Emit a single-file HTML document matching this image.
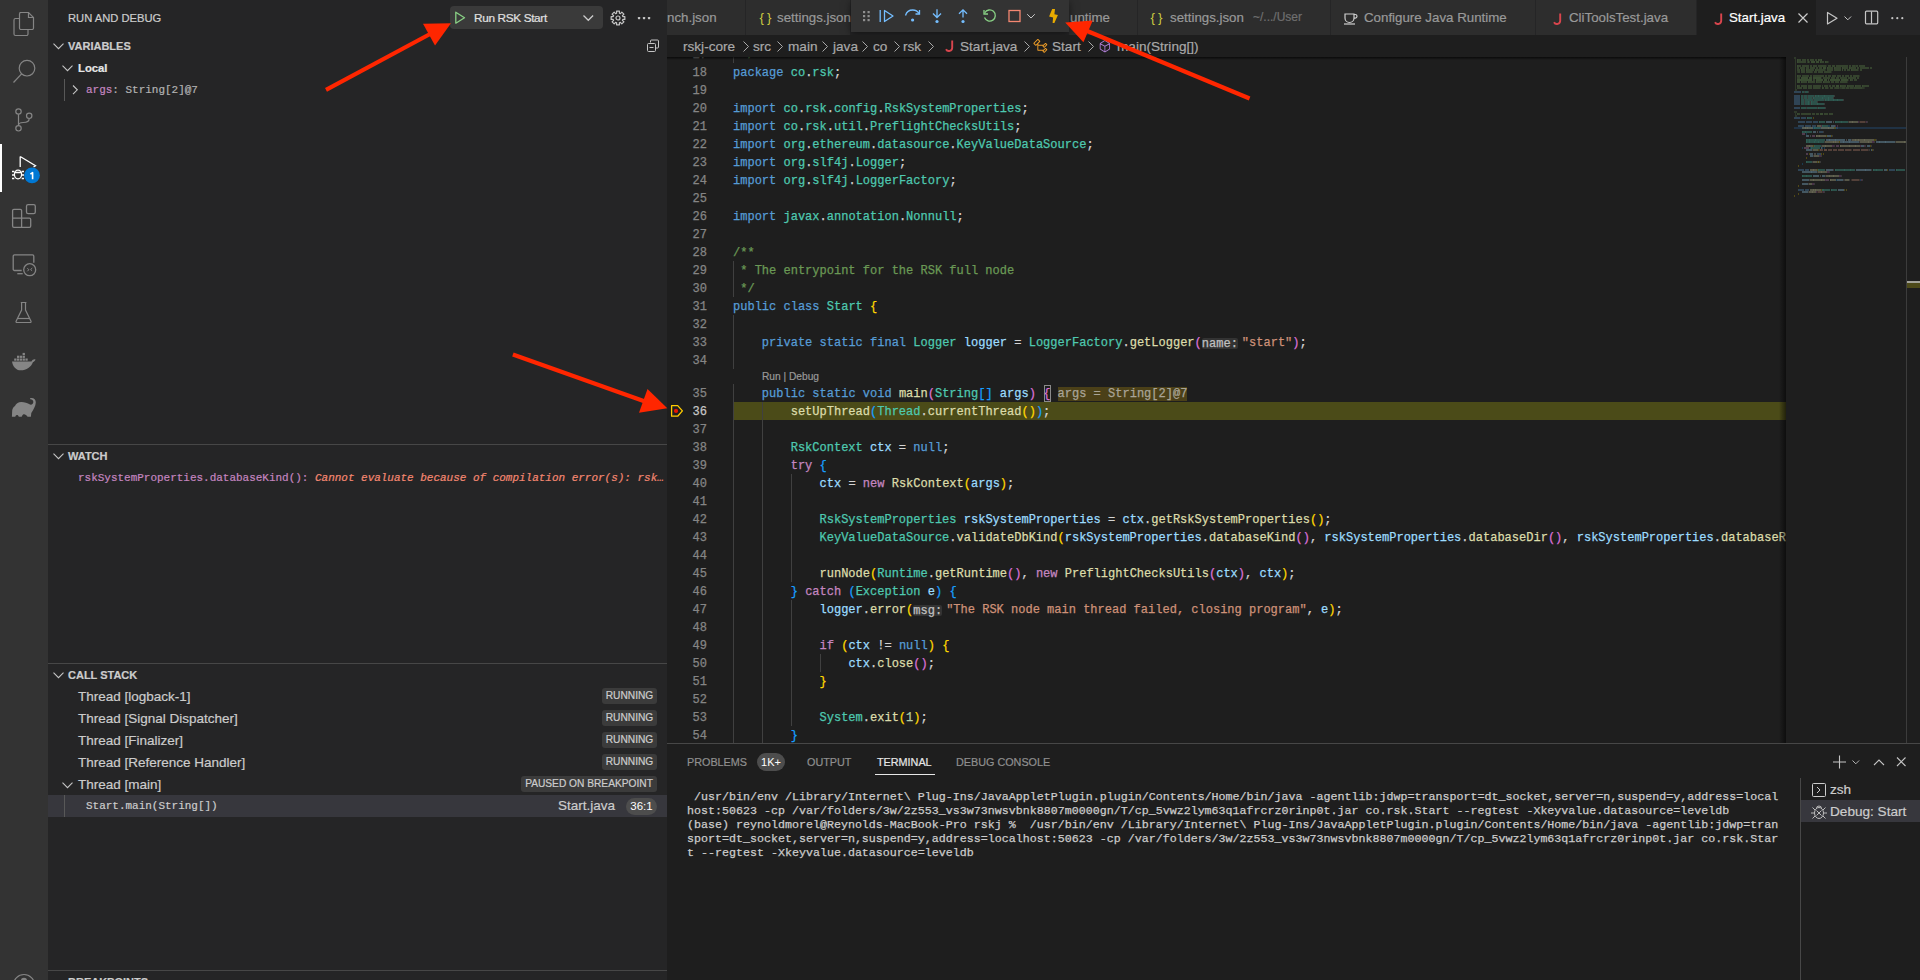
<!DOCTYPE html>
<html><head><meta charset="utf-8">
<style>
*{box-sizing:border-box;margin:0;padding:0}
html,body{width:1920px;height:980px;overflow:hidden;background:#1e1e1e;font-family:"Liberation Sans",sans-serif;color:#cccccc}
.cl,.ln,.term,.mono{-webkit-text-stroke:0.25px currentColor}
.sb,.tabt,.crumb,.thr,.ptab,.badge,.hdr{-webkit-text-stroke:0.2px currentColor}
.abs{position:absolute}
#act{position:absolute;left:0;top:0;width:48px;height:980px;background:#333333}
#side{position:absolute;left:48px;top:0;width:619px;height:980px;background:#252526}
#tabs{position:absolute;left:667px;top:0;width:1253px;height:35px;background:#252526}
#crumbs{position:absolute;left:667px;top:35px;width:1253px;height:22px;background:#1e1e1e}
#editor{position:absolute;left:667px;top:57px;width:1253px;height:686px;background:#1e1e1e;overflow:hidden}
#panel{position:absolute;left:667px;top:743px;width:1253px;height:237px;background:#1e1e1e;border-top:1px solid #474747}
.sb{position:absolute;white-space:pre}
.ln{position:absolute;left:670px;width:37px;text-align:right;height:18px;line-height:18px;padding-top:1px;font-family:"Liberation Mono",monospace;font-size:12.03px;color:#858585}
.ln.act{color:#c6c6c6}
.cl{position:absolute;left:733px;height:18px;line-height:18px;padding-top:1px;font-family:"Liberation Mono",monospace;font-size:12.03px;white-space:pre;color:#d4d4d4}
.guide{position:absolute;width:1px;height:18px;background:#404040}
.hint{display:inline-block;height:11px;line-height:13px;vertical-align:-1px;background:#333333;color:#c0c0c0;margin-right:4px;border-radius:2px}
.box{}
.inlv{background:#4b4018;color:#a9a497;margin-left:7.22px}
.ui{font-family:"Liberation Sans",sans-serif}
.mono{font-family:"Liberation Mono",monospace}
.hdr{position:absolute;font-size:11px;font-weight:bold;color:#cccccc;height:22px;line-height:22px}
.badge{position:absolute;height:16px;line-height:16px;font-size:10.2px;color:#cccccc;background:#3b3b3b;border-radius:3px;padding:0;text-align:center;white-space:nowrap}
.thr{position:absolute;left:78px;font-size:13.5px;height:22px;line-height:22px;color:#cccccc;white-space:pre}
.tab{position:absolute;top:0;height:35px;background:#2d2d2d;border-right:1px solid #252526}
.tabt{position:absolute;top:0;height:35px;line-height:35px;font-size:13.3px;color:#999999;white-space:pre}
.crumb{position:absolute;top:36px;height:22px;line-height:22px;font-size:13.6px;color:#a9a9a9;white-space:pre}
.ptab{position:absolute;top:755px;height:14px;line-height:14px;font-size:10.8px;color:#8f8f8f;white-space:pre}
.term{position:absolute;left:687px;font-family:"Liberation Mono",monospace;font-size:11.67px;height:14px;line-height:14px;color:#cccccc;white-space:pre}
</style></head>
<body>
<!-- activity bar -->
<div id="act"></div>
<div class="abs" style="left:0;top:144px;width:2px;height:48px;background:#ffffff"></div>
<svg class="abs" style="left:0;top:0" width="48" height="980" viewBox="0 0 48 980">
  <g fill="none" stroke="#858585" stroke-width="1.2">
    <!-- explorer -->
    <path d="M19.5 12.5h9l5 5v10.5a1.5 1.5 0 0 1-1.5 1.5h-11a1.5 1.5 0 0 1-1.5-1.5v-14a1.5 1.5 0 0 1 1.5-1.5z"/>
    <path d="M28.5 12.5v5h5"/>
    <path d="M19.5 18.5h-4a1.5 1.5 0 0 0-1.5 1.5v14a1.5 1.5 0 0 0 1.5 1.5h11a1.5 1.5 0 0 0 1.5-1.5v-4"/>
    <!-- search -->
    <circle cx="27" cy="68.2" r="7.8"/>
    <path d="M21.6 73.8L13.5 82.5"/>
    <!-- scm -->
    <circle cx="18.5" cy="111.5" r="2.7"/>
    <circle cx="18.5" cy="128.3" r="2.7"/>
    <circle cx="29.2" cy="115.8" r="2.7"/>
    <path d="M18.5 114.2v11.4"/>
    <path d="M29.2 118.5c0 3-3 4-6 4s-4.7 1-4.7 3"/>
    <!-- extensions -->
    <path d="M13.9 209.3h6.4a1.3 1.3 0 0 1 1.3 1.3v7.5h7.8a1.3 1.3 0 0 1 1.3 1.3v6.6a1.3 1.3 0 0 1-1.3 1.3h-15.5a1.3 1.3 0 0 1-1.3-1.3v-15.4a1.3 1.3 0 0 1 1.3-1.3zM12.6 218.1h9M21.6 218.1v9.2" stroke-width="1.3"/>
    <rect x="26.5" y="204.7" width="8.8" height="9" rx="1.6" stroke-width="1.3"/>
    <!-- remote -->
    <path d="M21.7 270.5h-7.2a1.3 1.3 0 0 1-1.3-1.3v-13a1.3 1.3 0 0 1 1.3-1.3h18a1.3 1.3 0 0 1 1.3 1.3v6.5" stroke-width="1.3"/>
    <path d="M17.3 273.7h5.4" stroke-width="1.3"/>
    <circle cx="29.7" cy="269.7" r="6" stroke-width="1.3"/>
    <path d="M27.3 268.3l1.6 1.4-1.6 1.6M32.3 268l-1.7 1.5 1.5 1.3" stroke-width="1"/>
    <!-- testing -->
    <path d="M20.8 302.5h5.6M21.6 302.5v7.5l-5.5 11.3c-.3.7.1 1.2.8 1.2h13.3c.7 0 1.1-.5.8-1.2l-5.5-11.3v-7.5"/>
    <path d="M17.8 318.5h11.8"/>
  </g>
  <!-- debug icon -->
  <g fill="none" stroke="#ffffff" stroke-width="1.3">
    <path d="M20.2 156.5v10.5M20.2 156.5l15.3 9.3-2 1.2"/>
    <ellipse cx="18" cy="174.5" rx="3.6" ry="4.3"/>
    <path d="M12 171.5h2.3M12 175h2.3M12 178.5h2.3M21.7 171.5h2.3M21.7 175h2.3M21.7 178.5h2.3M14.8 172.5h6.5"/>
  </g>
  <circle cx="32" cy="175.3" r="7.9" fill="#0078d4"/>
  <path d="M30.4 174.2L32.6 172.6V179.2" fill="none" stroke="#ffffff" stroke-width="1.6" stroke-linejoin="round"/>
  <!-- docker -->
  <g fill="#858585">
    <path d="M12 361.5h19.5c.8-1.7 2.5-2.5 4-2 -.5 1.3-1.3 2.2-2.5 2.5-1.8 5-6.5 8.3-12.3 8.3-4.7 0-8-3.7-8.7-8.8z"/>
    <rect x="14.2" y="358.5" width="2.3" height="2.2"/><rect x="17" y="358.5" width="2.3" height="2.2"/><rect x="19.8" y="358.5" width="2.3" height="2.2"/><rect x="22.6" y="358.5" width="2.3" height="2.2"/><rect x="25.4" y="358.5" width="2.3" height="2.2"/>
    <rect x="19.8" y="355.7" width="2.3" height="2.2"/><rect x="22.6" y="355.7" width="2.3" height="2.2"/><rect x="17" y="355.7" width="2.3" height="2.2"/>
    <rect x="22.6" y="352.9" width="2.3" height="2.2"/>
    <!-- gradle elephant -->
    <path d="M11.9 416.8L12.2 410.5C12.5 408.2 13.5 406.8 15 406C15.8 403.8 18 402.1 21.5 402C24.5 402 27.5 403 30 404.6C32 405 33.6 403.5 33.3 401.5C33 400 31.8 399.6 31 399.6C30 399.6 29.8 398.4 30.5 398.1C33.5 397.5 36 399.5 35.8 402.5C35.6 406 33.5 409.5 31.3 413L30.9 416.8L27.6 416.8C26.5 414.8 25 414 23.7 414.2C22.8 414.5 22 415.5 21.7 416.8L18.8 416.8C18.3 415.3 17.7 414.8 16.8 414.9C16 415 15.6 415.8 15.2 416.8Z"/>
  </g>
  <!-- account -->
  <circle cx="24" cy="985" r="10.5" fill="none" stroke="#858585" stroke-width="1.2"/>
  <circle cx="24" cy="981" r="3.2" fill="#858585"/>
</svg>

<!-- side bar -->
<div id="side"></div>
<div class="sb" style="left:68px;top:11px;font-size:11.2px;line-height:14px;color:#cccccc">RUN AND DEBUG</div>
<div class="abs" style="left:450px;top:6px;width:153px;height:23px;background:#3a3a3a;border-radius:4px"></div>
<svg class="abs" style="left:450px;top:6px" width="153" height="23" viewBox="0 0 153 23">
  <path d="M5.8 6.2v11l8.7-5.5z" fill="none" stroke="#89d185" stroke-width="1.3" stroke-linejoin="round"/>
  <path d="M133.5 9.5l4.8 4.8 4.8-4.8" fill="none" stroke="#cccccc" stroke-width="1.3"/>
</svg>
<div class="sb" style="left:474px;top:10px;font-size:11.8px;letter-spacing:-0.35px;line-height:16px;color:#e0e0e0">Run RSK Start</div>
<svg class="abs" style="left:608px;top:8px" width="20" height="20" viewBox="0 0 20 20"><g fill="none" stroke="#c5c5c5" stroke-width="1.2" stroke-linejoin="round"><path d="M14.81 8.62 L16.85 8.54 L16.85 11.46 L14.81 11.38 L14.37 12.42 L15.87 13.81 L13.81 15.87 L12.42 14.37 L11.38 14.81 L11.46 16.85 L8.54 16.85 L8.62 14.81 L7.58 14.37 L6.19 15.87 L4.13 13.81 L5.63 12.42 L5.19 11.38 L3.15 11.46 L3.15 8.54 L5.19 8.62 L5.63 7.58 L4.13 6.19 L6.19 4.13 L7.58 5.63 L8.62 5.19 L8.54 3.15 L11.46 3.15 L11.38 5.19 L12.42 5.63 L13.81 4.13 L15.87 6.19 L14.37 7.58Z"/><circle cx="10" cy="10" r="2"/></g></svg>
<svg class="abs" style="left:636px;top:15px" width="16" height="6"><g fill="#c5c5c5"><rect x="1.9" y="1.9" width="2.3" height="2.3" rx="0.6"/><rect x="6.9" y="1.9" width="2.3" height="2.3" rx="0.6"/><rect x="11.9" y="1.9" width="2.3" height="2.3" rx="0.6"/></g></svg>

<!-- VARIABLES -->
<svg class="abs" style="left:48px;top:35px" width="40" height="22"><path d="M5.5 8.7l5 5 5-5" fill="none" stroke="#c5c5c5" stroke-width="1.1"/></svg>
<div class="hdr" style="left:68px;top:35px">VARIABLES</div>
<svg class="abs" style="left:645px;top:38px" width="16" height="16" viewBox="0 0 16 16"><g fill="none" stroke="#c5c5c5" stroke-width="1"><path d="M5.5 4.5v-1.5a1 1 0 0 1 1-1h6a1 1 0 0 1 1 1v6a1 1 0 0 1-1 1h-1.5"/><rect x="2.5" y="5.5" width="8" height="8" rx="1"/><path d="M4.5 9.5h4"/></g></svg>
<svg class="abs" style="left:58px;top:57px" width="20" height="22"><path d="M4.5 8.7l5 5 5-5" fill="none" stroke="#c5c5c5" stroke-width="1.1"/></svg>
<div class="sb" style="left:78px;top:57px;font-size:11.3px;font-weight:bold;line-height:22px;color:#e6e6e6">Local</div>
<div class="abs" style="left:64px;top:79px;width:1px;height:22px;background:#585858"></div>
<svg class="abs" style="left:68px;top:79px" width="14" height="22"><path d="M5 6.5l4.3 4.3-4.3 4.3" fill="none" stroke="#c5c5c5" stroke-width="1.1"/></svg>
<div class="sb mono" style="left:86px;top:79px;font-size:10.97px;line-height:22px;color:#b3b3b3"><span style="color:#c586c0">args</span>: String[2]@7</div>

<!-- WATCH -->
<div class="abs" style="left:48px;top:444px;width:619px;height:1px;background:#474747"></div>
<svg class="abs" style="left:48px;top:445px" width="40" height="22"><path d="M5.5 8.7l5 5 5-5" fill="none" stroke="#c5c5c5" stroke-width="1.1"/></svg>
<div class="hdr" style="left:68px;top:445px">WATCH</div>
<div class="sb mono" style="left:78px;top:467px;font-size:10.97px;line-height:22px;color:#c586c0">rskSystemProperties.databaseKind(): <span style="color:#f48771;font-style:italic">Cannot evaluate because of compilation error(s): rsk…</span></div>

<!-- CALL STACK -->
<div class="abs" style="left:48px;top:663px;width:619px;height:1px;background:#474747"></div>
<svg class="abs" style="left:48px;top:664px" width="40" height="22"><path d="M5.5 8.7l5 5 5-5" fill="none" stroke="#c5c5c5" stroke-width="1.1"/></svg>
<div class="hdr" style="left:68px;top:664px">CALL STACK</div>
<div class="thr" style="top:686px">Thread [logback-1]</div>
<div class="badge" style="left:602px;top:688px;width:55px">RUNNING</div>
<div class="thr" style="top:708px">Thread [Signal Dispatcher]</div>
<div class="badge" style="left:602px;top:710px;width:55px">RUNNING</div>
<div class="thr" style="top:730px">Thread [Finalizer]</div>
<div class="badge" style="left:602px;top:732px;width:55px">RUNNING</div>
<div class="thr" style="top:752px">Thread [Reference Handler]</div>
<div class="badge" style="left:602px;top:754px;width:55px">RUNNING</div>
<svg class="abs" style="left:58px;top:774px" width="20" height="22"><path d="M4.5 8.7l5 5 5-5" fill="none" stroke="#c5c5c5" stroke-width="1.1"/></svg>
<div class="thr" style="top:774px">Thread [main]</div>
<div class="badge" style="left:521px;top:776px;width:136px;white-space:nowrap;padding:0">PAUSED ON BREAKPOINT</div>
<div class="abs" style="left:48px;top:795px;width:619px;height:22px;background:#37373d"></div>
<div class="abs" style="left:64px;top:795px;width:1px;height:22px;background:#585858"></div>
<div class="sb mono" style="left:86px;top:795px;font-size:10.97px;line-height:22px;color:#cccccc">Start.main(String[])</div>
<div class="sb" style="left:558px;top:795px;font-size:13.5px;line-height:22px;color:#cccccc">Start.java</div>
<div class="abs" style="left:626px;top:798px;width:31px;height:17px;border-radius:9px;background:#4d4d4d;font-size:11.5px;line-height:17px;text-align:center;color:#ffffff">36:1</div>

<!-- BREAKPOINTS -->
<div class="abs" style="left:48px;top:970px;width:619px;height:1px;background:#474747"></div>
<div class="hdr" style="left:68px;top:971px">BREAKPOINTS</div>

<!-- tabs -->
<div id="tabs"></div>
<div class="tab" style="left:667px;width:79px"></div>
<div class="tabt" style="left:667px">nch.json</div>
<div class="tab" style="left:746px;width:105px"></div>
<div class="tabt" style="left:759.5px;color:#cbcb41;letter-spacing:3px;-webkit-text-stroke:0">{}</div>
<div class="tabt" style="left:777px">settings.json</div>
<div class="tab" style="left:1069px;width:69px"></div>
<div class="tabt" style="left:1070px">untime</div>
<div class="tab" style="left:1138px;width:193px"></div>
<div class="tabt" style="left:1150.5px;color:#cbcb41;letter-spacing:3px;-webkit-text-stroke:0">{}</div>
<div class="tabt" style="left:1170px">settings.json</div>
<div class="tabt" style="left:1253px;font-size:12px;color:#6f6f6f">~/.../User</div>
<div class="tab" style="left:1331px;width:205px"></div>
<svg class="abs" style="left:1342px;top:10px" width="18" height="16" viewBox="0 0 18 16"><g fill="none" stroke="#d0d0d0" stroke-width="1.2"><path d="M3 4h9v4a4.5 4.5 0 0 1-9 0z"/><path d="M12 4.5h1.2a1.8 1.8 0 0 1 0 3.6H12"/><path d="M2 14h11"/></g></svg>
<div class="tabt" style="left:1364px">Configure Java Runtime</div>
<div class="tab" style="left:1536px;width:161px"></div>
<svg class="abs" style="left:1552.5px;top:12.5px" width="10" height="13" viewBox="0 0 10 13"><path d="M7.2 0.6V7.6A3.3 3.3 0 0 1 1 9.3" fill="none" stroke="#d9454d" stroke-width="1.9"/></svg>
<div class="tabt" style="left:1569px">CliToolsTest.java</div>
<div class="abs" style="left:1697px;top:0;width:119px;height:35px;background:#1e1e1e"></div>
<svg class="abs" style="left:1713.5px;top:12.5px" width="10" height="13" viewBox="0 0 10 13"><path d="M7.2 0.6V7.6A3.3 3.3 0 0 1 1 9.3" fill="none" stroke="#d9454d" stroke-width="1.9"/></svg>
<div class="tabt" style="left:1729px;color:#ffffff">Start.java</div>
<svg class="abs" style="left:1795px;top:10px" width="16" height="16" viewBox="0 0 16 16"><path d="M3.5 3.5l9 9M12.5 3.5l-9 9" fill="none" stroke="#cccccc" stroke-width="1.2"/></svg>
<svg class="abs" style="left:1822px;top:9px" width="96" height="18" viewBox="0 0 96 18">
  <g fill="none" stroke="#c5c5c5" stroke-width="1.2">
    <path d="M5.5 3.5v11.5l9.5-5.8z" stroke-linejoin="round"/>
    <path d="M22.5 7.5l3.3 3.3 3.3-3.3" stroke-width="1"/>
    <rect x="43.5" y="2.2" width="12.2" height="12.6" rx="1"/>
    <path d="M49.5 2.5v12"/>
  </g>
  <g fill="#c5c5c5"><circle cx="70.3" cy="9.2" r="1.1"/><circle cx="75.3" cy="9.2" r="1.1"/><circle cx="80.3" cy="9.2" r="1.1"/></g>
</svg>

<!-- debug toolbar -->
<div class="abs" style="left:851px;top:0;width:218px;height:32px;background:#333333;box-shadow:0 2px 8px rgba(0,0,0,0.5)"></div>
<svg class="abs" style="left:851px;top:0" width="218" height="32" viewBox="0 0 218 32">
  <g fill="#8f8f8f"><rect x="12" y="11" width="2.2" height="2.2"/><rect x="16.5" y="11" width="2.2" height="2.2"/><rect x="12" y="15" width="2.2" height="2.2"/><rect x="16.5" y="15" width="2.2" height="2.2"/><rect x="12" y="19" width="2.2" height="2.2"/><rect x="16.5" y="19" width="2.2" height="2.2"/></g>
  <g fill="none" stroke="#75beff" stroke-width="1.3">
    <path d="M29.2 10v12"/>
    <path d="M33.5 10.5v11l8.5-5.5z" stroke-linejoin="round"/>
    <path d="M54.5 15.5c1-3.5 4-5.5 7.3-5.5 2.8 0 5 1.4 6.2 3.5"/>
    <path d="M68.5 10v4h-4"/>
    <path d="M86 9.2v7.8M82 13.5l4 4 4-4"/>
    <path d="M112 10v7.5M108 13.8l4-4 4 4"/>
  </g>
  <g fill="#75beff"><circle cx="61.6" cy="20" r="1.6"/><circle cx="86" cy="21.5" r="1.6"/><circle cx="112" cy="21.5" r="1.6"/></g>
  <g fill="none" stroke="#89d185" stroke-width="1.3"><path d="M133.8 12.8a5.6 5.6 0 1 1-.3 4.8"/><path d="M133 10v4h4"/></g>
  <rect x="158" y="10.5" width="11" height="11" fill="none" stroke="#f48771" stroke-width="1.3"/>
  <path d="M176.2 14.2l3.8 3.8 3.8-3.8" fill="none" stroke="#c5c5c5" stroke-width="1"/>
  <path d="M201.2 9L204 9L203.4 14.3L206.9 15.1L203.4 23L201.6 23L202.1 17.4L198.1 16.5Z" fill="#e8ab00"/>
</svg>

<!-- breadcrumbs -->
<div id="crumbs"></div>
<div class="crumb" style="left:683px">rskj-core</div>
<div class="crumb" style="left:753px">src</div>
<div class="crumb" style="left:788px">main</div>
<div class="crumb" style="left:833px">java</div>
<div class="crumb" style="left:873px">co</div>
<div class="crumb" style="left:903px">rsk</div>
<svg class="abs" style="left:944.5px;top:40.3px" width="10" height="13" viewBox="0 0 10 13"><path d="M7.2 0.6V7.6A3.3 3.3 0 0 1 1 9.3" fill="none" stroke="#d9454d" stroke-width="1.9"/></svg>
<div class="crumb" style="left:960px">Start.java</div>
<div class="crumb" style="left:1052px">Start</div>
<div class="crumb" style="left:1117px">main(String[])</div>
<svg class="abs" style="left:667px;top:35px" width="460" height="22" viewBox="667 0 460 22">
  <g fill="none" stroke="#a9a9a9" stroke-width="1">
    <path d="M743.5 6.5l5 5-5 5M777.5 6.5l5 5-5 5M822.5 6.5l5 5-5 5M862.5 6.5l5 5-5 5M894.5 6.5l5 5-5 5M928.5 6.5l5 5-5 5M1024.5 6.5l5 5-5 5M1088.5 6.5l5 5-5 5"/>
  </g>
  <path transform="translate(1032.5 3)" fill="#ee9d28" d="M11.34 9.71h.71l2.67-2.67v-.71L13.38 5h-.7l-1.82 1.81h-5V5.560l1.860-1.860V3l-2-2H5L1 5v.71l2 2h.71l1.14-1.15v5.79l.5.5H10v.52l1.33 1.34h.71l2.670-2.670v-.710L13.37 10h-.7l-1.86 1.85h-5v-4H10v.48l1.34 1.38zm1.69-3.65l.63.63-2 2-.63-.63 2-2zm0 5l.63.63-2 2-.63-.63 2-2zM3.35 6.65l-1.29-1.3 3.29-3.29 1.3 1.29-3.3 3.3z"/>
  <path transform="translate(1098 4.5) scale(0.86)" fill="#b180d7" d="M13.51 4l-5-3h-1l-5 3-.49.86v6l.49.85 5 3h1l5-3 .49-.85v-6L13.51 4zm-6 9.560l-4.5-2.7V5.7l4.5 2.45v5.41zM3.27 4.7l4.74-2.84 4.74 2.84-4.74 2.59L3.27 4.7zm9.740 6.160l-4.5 2.7V8.15l4.5-2.45v5.16z"/>
</svg>

<!-- editor -->
<div class="abs" style="left:667px;top:57px;width:1253px;height:686px;background:#1e1e1e"></div>
<div class="abs" style="left:733px;top:402px;width:1053px;height:18px;background:#4b4b18"></div>
<div style="position:absolute;left:0;top:0;width:1786px;height:743px;overflow:hidden;clip-path:inset(57px 0 0 0)"><div class="guide" style="left:733.00px;top:45px"></div>
<div class="ln" style="top:45px">17</div>
<div class="cl" style="top:45px"><span style="color:#6a9955"> */</span></div>
<div class="ln" style="top:63px">18</div>
<div class="cl" style="top:63px"><span style="color:#569cd6">package</span><span style="color:#d4d4d4"> </span><span style="color:#4ec9b0">co</span><span style="color:#d4d4d4">.</span><span style="color:#4ec9b0">rsk</span><span style="color:#d4d4d4">;</span></div>
<div class="ln" style="top:81px">19</div>
<div class="cl" style="top:81px"></div>
<div class="ln" style="top:99px">20</div>
<div class="cl" style="top:99px"><span style="color:#569cd6">import</span><span style="color:#d4d4d4"> </span><span style="color:#4ec9b0">co</span><span style="color:#d4d4d4">.</span><span style="color:#4ec9b0">rsk</span><span style="color:#d4d4d4">.</span><span style="color:#4ec9b0">config</span><span style="color:#d4d4d4">.</span><span style="color:#4ec9b0">RskSystemProperties</span><span style="color:#d4d4d4">;</span></div>
<div class="ln" style="top:117px">21</div>
<div class="cl" style="top:117px"><span style="color:#569cd6">import</span><span style="color:#d4d4d4"> </span><span style="color:#4ec9b0">co</span><span style="color:#d4d4d4">.</span><span style="color:#4ec9b0">rsk</span><span style="color:#d4d4d4">.</span><span style="color:#4ec9b0">util</span><span style="color:#d4d4d4">.</span><span style="color:#4ec9b0">PreflightChecksUtils</span><span style="color:#d4d4d4">;</span></div>
<div class="ln" style="top:135px">22</div>
<div class="cl" style="top:135px"><span style="color:#569cd6">import</span><span style="color:#d4d4d4"> </span><span style="color:#4ec9b0">org</span><span style="color:#d4d4d4">.</span><span style="color:#4ec9b0">ethereum</span><span style="color:#d4d4d4">.</span><span style="color:#4ec9b0">datasource</span><span style="color:#d4d4d4">.</span><span style="color:#4ec9b0">KeyValueDataSource</span><span style="color:#d4d4d4">;</span></div>
<div class="ln" style="top:153px">23</div>
<div class="cl" style="top:153px"><span style="color:#569cd6">import</span><span style="color:#d4d4d4"> </span><span style="color:#4ec9b0">org</span><span style="color:#d4d4d4">.</span><span style="color:#4ec9b0">slf4j</span><span style="color:#d4d4d4">.</span><span style="color:#4ec9b0">Logger</span><span style="color:#d4d4d4">;</span></div>
<div class="ln" style="top:171px">24</div>
<div class="cl" style="top:171px"><span style="color:#569cd6">import</span><span style="color:#d4d4d4"> </span><span style="color:#4ec9b0">org</span><span style="color:#d4d4d4">.</span><span style="color:#4ec9b0">slf4j</span><span style="color:#d4d4d4">.</span><span style="color:#4ec9b0">LoggerFactory</span><span style="color:#d4d4d4">;</span></div>
<div class="ln" style="top:189px">25</div>
<div class="cl" style="top:189px"></div>
<div class="ln" style="top:207px">26</div>
<div class="cl" style="top:207px"><span style="color:#569cd6">import</span><span style="color:#d4d4d4"> </span><span style="color:#4ec9b0">javax</span><span style="color:#d4d4d4">.</span><span style="color:#4ec9b0">annotation</span><span style="color:#d4d4d4">.</span><span style="color:#4ec9b0">Nonnull</span><span style="color:#d4d4d4">;</span></div>
<div class="ln" style="top:225px">27</div>
<div class="cl" style="top:225px"></div>
<div class="ln" style="top:243px">28</div>
<div class="cl" style="top:243px"><span style="color:#6a9955">/**</span></div>
<div class="guide" style="left:733.00px;top:261px"></div>
<div class="ln" style="top:261px">29</div>
<div class="cl" style="top:261px"><span style="color:#6a9955"> * The entrypoint for the RSK full node</span></div>
<div class="guide" style="left:733.00px;top:279px"></div>
<div class="ln" style="top:279px">30</div>
<div class="cl" style="top:279px"><span style="color:#6a9955"> */</span></div>
<div class="ln" style="top:297px">31</div>
<div class="cl" style="top:297px"><span style="color:#569cd6">public</span><span style="color:#d4d4d4"> </span><span style="color:#569cd6">class</span><span style="color:#d4d4d4"> </span><span style="color:#4ec9b0">Start</span><span style="color:#d4d4d4"> </span><span style="color:#ffd700">{</span></div>
<div class="guide" style="left:733.00px;top:315px"></div>
<div class="ln" style="top:315px">32</div>
<div class="cl" style="top:315px"></div>
<div class="guide" style="left:733.00px;top:333px"></div>
<div class="ln" style="top:333px">33</div>
<div class="cl" style="top:333px"><span style="color:#d4d4d4">    </span><span style="color:#569cd6">private</span><span style="color:#d4d4d4"> </span><span style="color:#569cd6">static</span><span style="color:#d4d4d4"> </span><span style="color:#569cd6">final</span><span style="color:#d4d4d4"> </span><span style="color:#4ec9b0">Logger</span><span style="color:#d4d4d4"> </span><span style="color:#9cdcfe">logger</span><span style="color:#d4d4d4"> = </span><span style="color:#4ec9b0">LoggerFactory</span><span style="color:#d4d4d4">.</span><span style="color:#dcdcaa">getLogger</span><span style="color:#da70d6">(</span><span class="hint">name:</span><span style="color:#ce9178">"start"</span><span style="color:#da70d6">)</span><span style="color:#d4d4d4">;</span></div>
<div class="guide" style="left:733.00px;top:351px"></div>
<div class="ln" style="top:351px">34</div>
<div class="cl" style="top:351px"></div>
<div class="guide" style="left:733.00px;top:384px"></div>
<div class="ln" style="top:384px">35</div>
<div class="cl" style="top:384px"><span style="color:#d4d4d4">    </span><span style="color:#569cd6">public</span><span style="color:#d4d4d4"> </span><span style="color:#569cd6">static</span><span style="color:#d4d4d4"> </span><span style="color:#569cd6">void</span><span style="color:#d4d4d4"> </span><span style="color:#dcdcaa">main</span><span style="color:#da70d6">(</span><span style="color:#4ec9b0">String</span><span style="color:#179fff">[]</span><span style="color:#d4d4d4"> </span><span style="color:#9cdcfe">args</span><span style="color:#da70d6">)</span><span style="color:#d4d4d4"> </span><span class="box" style="color:#da70d6">{</span><span class="inlv">args = String[2]@7</span></div>
<div class="guide" style="left:733.00px;top:402px"></div>
<div class="guide" style="left:761.88px;top:402px"></div>
<div class="ln act" style="top:402px">36</div>
<div class="cl" style="top:402px"><span style="color:#d4d4d4">        </span><span style="color:#dcdcaa">setUpThread</span><span style="color:#179fff">(</span><span style="color:#4ec9b0">Thread</span><span style="color:#d4d4d4">.</span><span style="color:#dcdcaa">currentThread</span><span style="color:#ffd700">()</span><span style="color:#179fff">)</span><span style="color:#d4d4d4">;</span></div>
<div class="guide" style="left:733.00px;top:420px"></div>
<div class="guide" style="left:761.88px;top:420px"></div>
<div class="ln" style="top:420px">37</div>
<div class="cl" style="top:420px"></div>
<div class="guide" style="left:733.00px;top:438px"></div>
<div class="guide" style="left:761.88px;top:438px"></div>
<div class="ln" style="top:438px">38</div>
<div class="cl" style="top:438px"><span style="color:#d4d4d4">        </span><span style="color:#4ec9b0">RskContext</span><span style="color:#d4d4d4"> </span><span style="color:#9cdcfe">ctx</span><span style="color:#d4d4d4"> = </span><span style="color:#569cd6">null</span><span style="color:#d4d4d4">;</span></div>
<div class="guide" style="left:733.00px;top:456px"></div>
<div class="guide" style="left:761.88px;top:456px"></div>
<div class="ln" style="top:456px">39</div>
<div class="cl" style="top:456px"><span style="color:#d4d4d4">        </span><span style="color:#c586c0">try</span><span style="color:#d4d4d4"> </span><span style="color:#179fff">{</span></div>
<div class="guide" style="left:733.00px;top:474px"></div>
<div class="guide" style="left:761.88px;top:474px"></div>
<div class="guide" style="left:790.76px;top:474px"></div>
<div class="ln" style="top:474px">40</div>
<div class="cl" style="top:474px"><span style="color:#d4d4d4">            </span><span style="color:#9cdcfe">ctx</span><span style="color:#d4d4d4"> = </span><span style="color:#c586c0">new</span><span style="color:#d4d4d4"> </span><span style="color:#dcdcaa">RskContext</span><span style="color:#ffd700">(</span><span style="color:#9cdcfe">args</span><span style="color:#ffd700">)</span><span style="color:#d4d4d4">;</span></div>
<div class="guide" style="left:733.00px;top:492px"></div>
<div class="guide" style="left:761.88px;top:492px"></div>
<div class="guide" style="left:790.76px;top:492px"></div>
<div class="ln" style="top:492px">41</div>
<div class="cl" style="top:492px"></div>
<div class="guide" style="left:733.00px;top:510px"></div>
<div class="guide" style="left:761.88px;top:510px"></div>
<div class="guide" style="left:790.76px;top:510px"></div>
<div class="ln" style="top:510px">42</div>
<div class="cl" style="top:510px"><span style="color:#d4d4d4">            </span><span style="color:#4ec9b0">RskSystemProperties</span><span style="color:#d4d4d4"> </span><span style="color:#9cdcfe">rskSystemProperties</span><span style="color:#d4d4d4"> = </span><span style="color:#9cdcfe">ctx</span><span style="color:#d4d4d4">.</span><span style="color:#dcdcaa">getRskSystemProperties</span><span style="color:#ffd700">()</span><span style="color:#d4d4d4">;</span></div>
<div class="guide" style="left:733.00px;top:528px"></div>
<div class="guide" style="left:761.88px;top:528px"></div>
<div class="guide" style="left:790.76px;top:528px"></div>
<div class="ln" style="top:528px">43</div>
<div class="cl" style="top:528px"><span style="color:#d4d4d4">            </span><span style="color:#4ec9b0">KeyValueDataSource</span><span style="color:#d4d4d4">.</span><span style="color:#dcdcaa">validateDbKind</span><span style="color:#ffd700">(</span><span style="color:#9cdcfe">rskSystemProperties</span><span style="color:#d4d4d4">.</span><span style="color:#dcdcaa">databaseKind</span><span style="color:#da70d6">()</span><span style="color:#d4d4d4">, </span><span style="color:#9cdcfe">rskSystemProperties</span><span style="color:#d4d4d4">.</span><span style="color:#dcdcaa">databaseDir</span><span style="color:#da70d6">()</span><span style="color:#d4d4d4">, </span><span style="color:#9cdcfe">rskSystemProperties</span><span style="color:#d4d4d4">.</span><span style="color:#dcdcaa">databaseReset</span><span style="color:#da70d6">()</span><span style="color:#d4d4d4">, </span><span style="color:#9cdcfe">rskSystemProperties</span><span style="color:#d4d4d4">.</span><span style="color:#dcdcaa">importEnabled</span><span style="color:#da70d6">()</span><span style="color:#ffd700">)</span><span style="color:#d4d4d4">;</span></div>
<div class="guide" style="left:733.00px;top:546px"></div>
<div class="guide" style="left:761.88px;top:546px"></div>
<div class="guide" style="left:790.76px;top:546px"></div>
<div class="ln" style="top:546px">44</div>
<div class="cl" style="top:546px"></div>
<div class="guide" style="left:733.00px;top:564px"></div>
<div class="guide" style="left:761.88px;top:564px"></div>
<div class="guide" style="left:790.76px;top:564px"></div>
<div class="ln" style="top:564px">45</div>
<div class="cl" style="top:564px"><span style="color:#d4d4d4">            </span><span style="color:#dcdcaa">runNode</span><span style="color:#ffd700">(</span><span style="color:#4ec9b0">Runtime</span><span style="color:#d4d4d4">.</span><span style="color:#dcdcaa">getRuntime</span><span style="color:#da70d6">()</span><span style="color:#d4d4d4">, </span><span style="color:#c586c0">new</span><span style="color:#d4d4d4"> </span><span style="color:#dcdcaa">PreflightChecksUtils</span><span style="color:#da70d6">(</span><span style="color:#9cdcfe">ctx</span><span style="color:#da70d6">)</span><span style="color:#d4d4d4">, </span><span style="color:#9cdcfe">ctx</span><span style="color:#ffd700">)</span><span style="color:#d4d4d4">;</span></div>
<div class="guide" style="left:733.00px;top:582px"></div>
<div class="guide" style="left:761.88px;top:582px"></div>
<div class="ln" style="top:582px">46</div>
<div class="cl" style="top:582px"><span style="color:#d4d4d4">        </span><span style="color:#179fff">}</span><span style="color:#d4d4d4"> </span><span style="color:#c586c0">catch</span><span style="color:#d4d4d4"> </span><span style="color:#179fff">(</span><span style="color:#4ec9b0">Exception</span><span style="color:#d4d4d4"> </span><span style="color:#9cdcfe">e</span><span style="color:#179fff">)</span><span style="color:#d4d4d4"> </span><span style="color:#179fff">{</span></div>
<div class="guide" style="left:733.00px;top:600px"></div>
<div class="guide" style="left:761.88px;top:600px"></div>
<div class="guide" style="left:790.76px;top:600px"></div>
<div class="ln" style="top:600px">47</div>
<div class="cl" style="top:600px"><span style="color:#d4d4d4">            </span><span style="color:#9cdcfe">logger</span><span style="color:#d4d4d4">.</span><span style="color:#dcdcaa">error</span><span style="color:#ffd700">(</span><span class="hint">msg:</span><span style="color:#ce9178">"The RSK node main thread failed, closing program"</span><span style="color:#d4d4d4">, </span><span style="color:#9cdcfe">e</span><span style="color:#ffd700">)</span><span style="color:#d4d4d4">;</span></div>
<div class="guide" style="left:733.00px;top:618px"></div>
<div class="guide" style="left:761.88px;top:618px"></div>
<div class="guide" style="left:790.76px;top:618px"></div>
<div class="ln" style="top:618px">48</div>
<div class="cl" style="top:618px"></div>
<div class="guide" style="left:733.00px;top:636px"></div>
<div class="guide" style="left:761.88px;top:636px"></div>
<div class="guide" style="left:790.76px;top:636px"></div>
<div class="ln" style="top:636px">49</div>
<div class="cl" style="top:636px"><span style="color:#d4d4d4">            </span><span style="color:#c586c0">if</span><span style="color:#d4d4d4"> </span><span style="color:#ffd700">(</span><span style="color:#9cdcfe">ctx</span><span style="color:#d4d4d4"> != </span><span style="color:#569cd6">null</span><span style="color:#ffd700">)</span><span style="color:#d4d4d4"> </span><span style="color:#ffd700">{</span></div>
<div class="guide" style="left:733.00px;top:654px"></div>
<div class="guide" style="left:761.88px;top:654px"></div>
<div class="guide" style="left:790.76px;top:654px"></div>
<div class="guide" style="left:819.64px;top:654px"></div>
<div class="ln" style="top:654px">50</div>
<div class="cl" style="top:654px"><span style="color:#d4d4d4">                </span><span style="color:#9cdcfe">ctx</span><span style="color:#d4d4d4">.</span><span style="color:#dcdcaa">close</span><span style="color:#da70d6">()</span><span style="color:#d4d4d4">;</span></div>
<div class="guide" style="left:733.00px;top:672px"></div>
<div class="guide" style="left:761.88px;top:672px"></div>
<div class="guide" style="left:790.76px;top:672px"></div>
<div class="ln" style="top:672px">51</div>
<div class="cl" style="top:672px"><span style="color:#d4d4d4">            </span><span style="color:#ffd700">}</span></div>
<div class="guide" style="left:733.00px;top:690px"></div>
<div class="guide" style="left:761.88px;top:690px"></div>
<div class="guide" style="left:790.76px;top:690px"></div>
<div class="ln" style="top:690px">52</div>
<div class="cl" style="top:690px"></div>
<div class="guide" style="left:733.00px;top:708px"></div>
<div class="guide" style="left:761.88px;top:708px"></div>
<div class="guide" style="left:790.76px;top:708px"></div>
<div class="ln" style="top:708px">53</div>
<div class="cl" style="top:708px"><span style="color:#d4d4d4">            </span><span style="color:#4ec9b0">System</span><span style="color:#d4d4d4">.</span><span style="color:#dcdcaa">exit</span><span style="color:#ffd700">(</span><span style="color:#b5cea8">1</span><span style="color:#ffd700">)</span><span style="color:#d4d4d4">;</span></div>
<div class="guide" style="left:733.00px;top:726px"></div>
<div class="guide" style="left:761.88px;top:726px"></div>
<div class="ln" style="top:726px">54</div>
<div class="cl" style="top:726px"><span style="color:#d4d4d4">        </span><span style="color:#179fff">}</span></div></div>
<div class="abs" style="left:1044px;top:384.5px;width:7px;height:17px;border:1px solid #8a8a8a"></div>
<div class="sb" style="left:762px;top:369px;height:15px;line-height:15px;font-size:10.2px;color:#999999">Run | Debug</div>
<!-- breakpoint -->
<svg class="abs" style="left:670px;top:404px" width="15" height="14" viewBox="0 0 15 14"><path d="M1.6 1.6H7.7L12.4 6.9L7.7 12.2H1.6Z" fill="#1e1e1e" stroke="#ffcc00" stroke-width="1.3" stroke-linejoin="round"/><circle cx="6" cy="6.9" r="2.1" fill="#e51400"/></svg>
<!-- scroll shadow under breadcrumbs -->
<div class="abs" style="left:667px;top:57px;width:1119px;height:3px;background:linear-gradient(#000000aa,transparent)"></div>
<!-- minimap -->
<div class="abs" style="left:1779px;top:57px;width:7px;height:686px;background:linear-gradient(to right,rgba(0,0,0,0),rgba(0,0,0,0.55))"></div>
<svg class="abs" style="left:1794px;top:57px;opacity:0.5" width="112" height="160" viewBox="0 0 112 160"><rect x="0" y="70" width="112" height="2" fill="#22466a"/><rect x="0" y="0" width="2" height="2" fill="#6a9955" fill-opacity="0.45"/><rect x="1" y="2" width="1" height="2" fill="#6a9955" fill-opacity="0.45"/><rect x="3" y="2" width="1" height="2" fill="#6a9955" fill-opacity="0.75"/><rect x="4" y="2" width="3" height="2" fill="#6a9955" fill-opacity="0.60"/><rect x="8" y="2" width="4" height="2" fill="#6a9955" fill-opacity="0.60"/><rect x="13" y="2" width="2" height="2" fill="#6a9955" fill-opacity="0.60"/><rect x="16" y="2" width="4" height="2" fill="#6a9955" fill-opacity="0.60"/><rect x="21" y="2" width="2" height="2" fill="#6a9955" fill-opacity="0.60"/><rect x="24" y="2" width="1" height="2" fill="#6a9955" fill-opacity="0.75"/><rect x="25" y="2" width="2" height="2" fill="#6a9955" fill-opacity="0.60"/><rect x="27" y="2" width="1" height="2" fill="#6a9955" fill-opacity="0.75"/><rect x="1" y="4" width="1" height="2" fill="#6a9955" fill-opacity="0.45"/><rect x="3" y="4" width="1" height="2" fill="#6a9955" fill-opacity="0.75"/><rect x="4" y="4" width="8" height="2" fill="#6a9955" fill-opacity="0.60"/><rect x="13" y="4" width="1" height="2" fill="#6a9955" fill-opacity="0.45"/><rect x="14" y="4" width="1" height="2" fill="#6a9955" fill-opacity="0.75"/><rect x="15" y="4" width="1" height="2" fill="#6a9955" fill-opacity="0.45"/><rect x="17" y="4" width="4" height="2" fill="#6a9955" fill-opacity="0.75"/><rect x="22" y="4" width="3" height="2" fill="#6a9955" fill-opacity="0.75"/><rect x="26" y="4" width="1" height="2" fill="#6a9955" fill-opacity="0.75"/><rect x="27" y="4" width="3" height="2" fill="#6a9955" fill-opacity="0.60"/><rect x="31" y="4" width="1" height="2" fill="#6a9955" fill-opacity="0.75"/><rect x="32" y="4" width="2" height="2" fill="#6a9955" fill-opacity="0.60"/><rect x="34" y="4" width="1" height="2" fill="#6a9955" fill-opacity="0.30"/><rect x="1" y="6" width="1" height="2" fill="#6a9955" fill-opacity="0.45"/><rect x="1" y="8" width="1" height="2" fill="#6a9955" fill-opacity="0.45"/><rect x="3" y="8" width="1" height="2" fill="#6a9955" fill-opacity="0.75"/><rect x="4" y="8" width="3" height="2" fill="#6a9955" fill-opacity="0.60"/><rect x="8" y="8" width="7" height="2" fill="#6a9955" fill-opacity="0.60"/><rect x="16" y="8" width="2" height="2" fill="#6a9955" fill-opacity="0.60"/><rect x="19" y="8" width="4" height="2" fill="#6a9955" fill-opacity="0.60"/><rect x="24" y="8" width="8" height="2" fill="#6a9955" fill-opacity="0.60"/><rect x="32" y="8" width="1" height="2" fill="#6a9955" fill-opacity="0.30"/><rect x="34" y="8" width="3" height="2" fill="#6a9955" fill-opacity="0.60"/><rect x="38" y="8" width="3" height="2" fill="#6a9955" fill-opacity="0.60"/><rect x="42" y="8" width="12" height="2" fill="#6a9955" fill-opacity="0.60"/><rect x="55" y="8" width="2" height="2" fill="#6a9955" fill-opacity="0.60"/><rect x="58" y="8" width="3" height="2" fill="#6a9955" fill-opacity="0.60"/><rect x="61" y="8" width="1" height="2" fill="#6a9955" fill-opacity="0.45"/><rect x="62" y="8" width="2" height="2" fill="#6a9955" fill-opacity="0.60"/><rect x="65" y="8" width="6" height="2" fill="#6a9955" fill-opacity="0.60"/><rect x="1" y="10" width="1" height="2" fill="#6a9955" fill-opacity="0.45"/><rect x="3" y="10" width="2" height="2" fill="#6a9955" fill-opacity="0.60"/><rect x="6" y="10" width="5" height="2" fill="#6a9955" fill-opacity="0.60"/><rect x="12" y="10" width="3" height="2" fill="#6a9955" fill-opacity="0.60"/><rect x="16" y="10" width="5" height="2" fill="#6a9955" fill-opacity="0.60"/><rect x="22" y="10" width="2" height="2" fill="#6a9955" fill-opacity="0.60"/><rect x="25" y="10" width="3" height="2" fill="#6a9955" fill-opacity="0.60"/><rect x="29" y="10" width="3" height="2" fill="#6a9955" fill-opacity="0.75"/><rect x="33" y="10" width="1" height="2" fill="#6a9955" fill-opacity="0.75"/><rect x="34" y="10" width="5" height="2" fill="#6a9955" fill-opacity="0.60"/><rect x="40" y="10" width="1" height="2" fill="#6a9955" fill-opacity="0.75"/><rect x="41" y="10" width="6" height="2" fill="#6a9955" fill-opacity="0.60"/><rect x="48" y="10" width="1" height="2" fill="#6a9955" fill-opacity="0.75"/><rect x="49" y="10" width="5" height="2" fill="#6a9955" fill-opacity="0.60"/><rect x="55" y="10" width="1" height="2" fill="#6a9955" fill-opacity="0.75"/><rect x="56" y="10" width="6" height="2" fill="#6a9955" fill-opacity="0.60"/><rect x="63" y="10" width="2" height="2" fill="#6a9955" fill-opacity="0.60"/><rect x="66" y="10" width="9" height="2" fill="#6a9955" fill-opacity="0.60"/><rect x="76" y="10" width="2" height="2" fill="#6a9955" fill-opacity="0.60"/><rect x="1" y="12" width="1" height="2" fill="#6a9955" fill-opacity="0.45"/><rect x="3" y="12" width="3" height="2" fill="#6a9955" fill-opacity="0.60"/><rect x="7" y="12" width="1" height="2" fill="#6a9955" fill-opacity="0.75"/><rect x="8" y="12" width="3" height="2" fill="#6a9955" fill-opacity="0.60"/><rect x="12" y="12" width="1" height="2" fill="#6a9955" fill-opacity="0.75"/><rect x="13" y="12" width="7" height="2" fill="#6a9955" fill-opacity="0.60"/><rect x="21" y="12" width="1" height="2" fill="#6a9955" fill-opacity="0.75"/><rect x="22" y="12" width="9" height="2" fill="#6a9955" fill-opacity="0.60"/><rect x="31" y="12" width="1" height="2" fill="#6a9955" fill-opacity="0.30"/><rect x="33" y="12" width="6" height="2" fill="#6a9955" fill-opacity="0.60"/><rect x="40" y="12" width="7" height="2" fill="#6a9955" fill-opacity="0.60"/><rect x="48" y="12" width="1" height="2" fill="#6a9955" fill-opacity="0.75"/><rect x="50" y="12" width="2" height="2" fill="#6a9955" fill-opacity="0.60"/><rect x="53" y="12" width="3" height="2" fill="#6a9955" fill-opacity="0.60"/><rect x="57" y="12" width="1" height="2" fill="#6a9955" fill-opacity="0.75"/><rect x="58" y="12" width="6" height="2" fill="#6a9955" fill-opacity="0.60"/><rect x="64" y="12" width="1" height="2" fill="#6a9955" fill-opacity="0.30"/><rect x="66" y="12" width="2" height="2" fill="#6a9955" fill-opacity="0.60"/><rect x="1" y="14" width="1" height="2" fill="#6a9955" fill-opacity="0.45"/><rect x="3" y="14" width="1" height="2" fill="#6a9955" fill-opacity="0.45"/><rect x="4" y="14" width="2" height="2" fill="#6a9955" fill-opacity="0.60"/><rect x="7" y="14" width="4" height="2" fill="#6a9955" fill-opacity="0.60"/><rect x="12" y="14" width="6" height="2" fill="#6a9955" fill-opacity="0.60"/><rect x="18" y="14" width="1" height="2" fill="#6a9955" fill-opacity="0.45"/><rect x="20" y="14" width="3" height="2" fill="#6a9955" fill-opacity="0.60"/><rect x="24" y="14" width="5" height="2" fill="#6a9955" fill-opacity="0.60"/><rect x="30" y="14" width="7" height="2" fill="#6a9955" fill-opacity="0.60"/><rect x="37" y="14" width="1" height="2" fill="#6a9955" fill-opacity="0.30"/><rect x="1" y="16" width="1" height="2" fill="#6a9955" fill-opacity="0.45"/><rect x="1" y="18" width="1" height="2" fill="#6a9955" fill-opacity="0.45"/><rect x="3" y="18" width="1" height="2" fill="#6a9955" fill-opacity="0.75"/><rect x="4" y="18" width="3" height="2" fill="#6a9955" fill-opacity="0.60"/><rect x="8" y="18" width="7" height="2" fill="#6a9955" fill-opacity="0.60"/><rect x="16" y="18" width="2" height="2" fill="#6a9955" fill-opacity="0.60"/><rect x="19" y="18" width="11" height="2" fill="#6a9955" fill-opacity="0.60"/><rect x="31" y="18" width="2" height="2" fill="#6a9955" fill-opacity="0.60"/><rect x="34" y="18" width="3" height="2" fill="#6a9955" fill-opacity="0.60"/><rect x="38" y="18" width="4" height="2" fill="#6a9955" fill-opacity="0.60"/><rect x="43" y="18" width="4" height="2" fill="#6a9955" fill-opacity="0.60"/><rect x="48" y="18" width="2" height="2" fill="#6a9955" fill-opacity="0.60"/><rect x="51" y="18" width="4" height="2" fill="#6a9955" fill-opacity="0.60"/><rect x="56" y="18" width="2" height="2" fill="#6a9955" fill-opacity="0.60"/><rect x="59" y="18" width="6" height="2" fill="#6a9955" fill-opacity="0.60"/><rect x="65" y="18" width="1" height="2" fill="#6a9955" fill-opacity="0.30"/><rect x="1" y="20" width="1" height="2" fill="#6a9955" fill-opacity="0.45"/><rect x="3" y="20" width="3" height="2" fill="#6a9955" fill-opacity="0.60"/><rect x="7" y="20" width="7" height="2" fill="#6a9955" fill-opacity="0.75"/><rect x="15" y="20" width="3" height="2" fill="#6a9955" fill-opacity="0.75"/><rect x="19" y="20" width="8" height="2" fill="#6a9955" fill-opacity="0.75"/><rect x="27" y="20" width="1" height="2" fill="#6a9955" fill-opacity="0.30"/><rect x="29" y="20" width="7" height="2" fill="#6a9955" fill-opacity="0.60"/><rect x="37" y="20" width="4" height="2" fill="#6a9955" fill-opacity="0.60"/><rect x="42" y="20" width="3" height="2" fill="#6a9955" fill-opacity="0.60"/><rect x="46" y="20" width="7" height="2" fill="#6a9955" fill-opacity="0.60"/><rect x="54" y="20" width="8" height="2" fill="#6a9955" fill-opacity="0.60"/><rect x="63" y="20" width="2" height="2" fill="#6a9955" fill-opacity="0.60"/><rect x="1" y="22" width="1" height="2" fill="#6a9955" fill-opacity="0.45"/><rect x="3" y="22" width="15" height="2" fill="#6a9955" fill-opacity="0.75"/><rect x="19" y="22" width="2" height="2" fill="#6a9955" fill-opacity="0.60"/><rect x="22" y="22" width="7" height="2" fill="#6a9955" fill-opacity="0.75"/><rect x="30" y="22" width="3" height="2" fill="#6a9955" fill-opacity="0.75"/><rect x="34" y="22" width="1" height="2" fill="#6a9955" fill-opacity="0.75"/><rect x="36" y="22" width="10" height="2" fill="#6a9955" fill-opacity="0.75"/><rect x="47" y="22" width="7" height="2" fill="#6a9955" fill-opacity="0.75"/><rect x="54" y="22" width="1" height="2" fill="#6a9955" fill-opacity="0.30"/><rect x="56" y="22" width="1" height="2" fill="#6a9955" fill-opacity="0.75"/><rect x="57" y="22" width="2" height="2" fill="#6a9955" fill-opacity="0.60"/><rect x="60" y="22" width="3" height="2" fill="#6a9955" fill-opacity="0.60"/><rect x="1" y="24" width="1" height="2" fill="#6a9955" fill-opacity="0.45"/><rect x="3" y="24" width="3" height="2" fill="#6a9955" fill-opacity="0.75"/><rect x="7" y="24" width="1" height="2" fill="#6a9955" fill-opacity="0.75"/><rect x="8" y="24" width="5" height="2" fill="#6a9955" fill-opacity="0.60"/><rect x="14" y="24" width="1" height="2" fill="#6a9955" fill-opacity="0.75"/><rect x="15" y="24" width="6" height="2" fill="#6a9955" fill-opacity="0.60"/><rect x="22" y="24" width="1" height="2" fill="#6a9955" fill-opacity="0.75"/><rect x="23" y="24" width="5" height="2" fill="#6a9955" fill-opacity="0.60"/><rect x="29" y="24" width="1" height="2" fill="#6a9955" fill-opacity="0.75"/><rect x="30" y="24" width="6" height="2" fill="#6a9955" fill-opacity="0.60"/><rect x="37" y="24" width="3" height="2" fill="#6a9955" fill-opacity="0.60"/><rect x="41" y="24" width="4" height="2" fill="#6a9955" fill-opacity="0.60"/><rect x="46" y="24" width="7" height="2" fill="#6a9955" fill-opacity="0.60"/><rect x="53" y="24" width="1" height="2" fill="#6a9955" fill-opacity="0.30"/><rect x="1" y="26" width="1" height="2" fill="#6a9955" fill-opacity="0.45"/><rect x="1" y="28" width="1" height="2" fill="#6a9955" fill-opacity="0.45"/><rect x="3" y="28" width="1" height="2" fill="#6a9955" fill-opacity="0.75"/><rect x="4" y="28" width="2" height="2" fill="#6a9955" fill-opacity="0.60"/><rect x="7" y="28" width="6" height="2" fill="#6a9955" fill-opacity="0.60"/><rect x="14" y="28" width="4" height="2" fill="#6a9955" fill-opacity="0.60"/><rect x="19" y="28" width="8" height="2" fill="#6a9955" fill-opacity="0.60"/><rect x="28" y="28" width="1" height="2" fill="#6a9955" fill-opacity="0.60"/><rect x="30" y="28" width="4" height="2" fill="#6a9955" fill-opacity="0.60"/><rect x="35" y="28" width="2" height="2" fill="#6a9955" fill-opacity="0.60"/><rect x="38" y="28" width="3" height="2" fill="#6a9955" fill-opacity="0.60"/><rect x="42" y="28" width="3" height="2" fill="#6a9955" fill-opacity="0.75"/><rect x="46" y="28" width="1" height="2" fill="#6a9955" fill-opacity="0.75"/><rect x="47" y="28" width="5" height="2" fill="#6a9955" fill-opacity="0.60"/><rect x="53" y="28" width="1" height="2" fill="#6a9955" fill-opacity="0.75"/><rect x="54" y="28" width="6" height="2" fill="#6a9955" fill-opacity="0.60"/><rect x="61" y="28" width="1" height="2" fill="#6a9955" fill-opacity="0.75"/><rect x="62" y="28" width="5" height="2" fill="#6a9955" fill-opacity="0.60"/><rect x="68" y="28" width="1" height="2" fill="#6a9955" fill-opacity="0.75"/><rect x="69" y="28" width="6" height="2" fill="#6a9955" fill-opacity="0.60"/><rect x="1" y="30" width="1" height="2" fill="#6a9955" fill-opacity="0.45"/><rect x="3" y="30" width="5" height="2" fill="#6a9955" fill-opacity="0.60"/><rect x="9" y="30" width="4" height="2" fill="#6a9955" fill-opacity="0.60"/><rect x="14" y="30" width="4" height="2" fill="#6a9955" fill-opacity="0.60"/><rect x="19" y="30" width="7" height="2" fill="#6a9955" fill-opacity="0.60"/><rect x="26" y="30" width="1" height="2" fill="#6a9955" fill-opacity="0.30"/><rect x="28" y="30" width="1" height="2" fill="#6a9955" fill-opacity="0.75"/><rect x="29" y="30" width="1" height="2" fill="#6a9955" fill-opacity="0.60"/><rect x="31" y="30" width="3" height="2" fill="#6a9955" fill-opacity="0.60"/><rect x="34" y="30" width="1" height="2" fill="#6a9955" fill-opacity="0.30"/><rect x="36" y="30" width="3" height="2" fill="#6a9955" fill-opacity="0.60"/><rect x="40" y="30" width="1" height="2" fill="#6a9955" fill-opacity="0.45"/><rect x="41" y="30" width="4" height="2" fill="#6a9955" fill-opacity="0.60"/><rect x="45" y="30" width="1" height="2" fill="#6a9955" fill-opacity="0.30"/><rect x="46" y="30" width="2" height="2" fill="#6a9955" fill-opacity="0.45"/><rect x="48" y="30" width="3" height="2" fill="#6a9955" fill-opacity="0.60"/><rect x="51" y="30" width="1" height="2" fill="#6a9955" fill-opacity="0.30"/><rect x="52" y="30" width="3" height="2" fill="#6a9955" fill-opacity="0.60"/><rect x="55" y="30" width="1" height="2" fill="#6a9955" fill-opacity="0.30"/><rect x="56" y="30" width="3" height="2" fill="#6a9955" fill-opacity="0.60"/><rect x="59" y="30" width="1" height="2" fill="#6a9955" fill-opacity="0.45"/><rect x="60" y="30" width="8" height="2" fill="#6a9955" fill-opacity="0.60"/><rect x="68" y="30" width="2" height="2" fill="#6a9955" fill-opacity="0.45"/><rect x="70" y="30" width="1" height="2" fill="#6a9955" fill-opacity="0.30"/><rect x="1" y="32" width="2" height="2" fill="#6a9955" fill-opacity="0.45"/><rect x="0" y="34" width="7" height="2" fill="#569cd6" fill-opacity="0.60"/><rect x="8" y="34" width="2" height="2" fill="#4ec9b0" fill-opacity="0.60"/><rect x="10" y="34" width="1" height="2" fill="#d4d4d4" fill-opacity="0.30"/><rect x="11" y="34" width="3" height="2" fill="#4ec9b0" fill-opacity="0.60"/><rect x="14" y="34" width="1" height="2" fill="#d4d4d4" fill-opacity="0.30"/><rect x="0" y="38" width="6" height="2" fill="#569cd6" fill-opacity="0.60"/><rect x="7" y="38" width="2" height="2" fill="#4ec9b0" fill-opacity="0.60"/><rect x="9" y="38" width="1" height="2" fill="#d4d4d4" fill-opacity="0.30"/><rect x="10" y="38" width="3" height="2" fill="#4ec9b0" fill-opacity="0.60"/><rect x="13" y="38" width="1" height="2" fill="#d4d4d4" fill-opacity="0.30"/><rect x="14" y="38" width="6" height="2" fill="#4ec9b0" fill-opacity="0.60"/><rect x="20" y="38" width="1" height="2" fill="#d4d4d4" fill-opacity="0.30"/><rect x="21" y="38" width="1" height="2" fill="#4ec9b0" fill-opacity="0.75"/><rect x="22" y="38" width="2" height="2" fill="#4ec9b0" fill-opacity="0.60"/><rect x="24" y="38" width="1" height="2" fill="#4ec9b0" fill-opacity="0.75"/><rect x="25" y="38" width="5" height="2" fill="#4ec9b0" fill-opacity="0.60"/><rect x="30" y="38" width="1" height="2" fill="#4ec9b0" fill-opacity="0.75"/><rect x="31" y="38" width="9" height="2" fill="#4ec9b0" fill-opacity="0.60"/><rect x="40" y="38" width="1" height="2" fill="#d4d4d4" fill-opacity="0.30"/><rect x="0" y="40" width="6" height="2" fill="#569cd6" fill-opacity="0.60"/><rect x="7" y="40" width="2" height="2" fill="#4ec9b0" fill-opacity="0.60"/><rect x="9" y="40" width="1" height="2" fill="#d4d4d4" fill-opacity="0.30"/><rect x="10" y="40" width="3" height="2" fill="#4ec9b0" fill-opacity="0.60"/><rect x="13" y="40" width="1" height="2" fill="#d4d4d4" fill-opacity="0.30"/><rect x="14" y="40" width="4" height="2" fill="#4ec9b0" fill-opacity="0.60"/><rect x="18" y="40" width="1" height="2" fill="#d4d4d4" fill-opacity="0.30"/><rect x="19" y="40" width="1" height="2" fill="#4ec9b0" fill-opacity="0.75"/><rect x="20" y="40" width="8" height="2" fill="#4ec9b0" fill-opacity="0.60"/><rect x="28" y="40" width="1" height="2" fill="#4ec9b0" fill-opacity="0.75"/><rect x="29" y="40" width="5" height="2" fill="#4ec9b0" fill-opacity="0.60"/><rect x="34" y="40" width="1" height="2" fill="#4ec9b0" fill-opacity="0.75"/><rect x="35" y="40" width="4" height="2" fill="#4ec9b0" fill-opacity="0.60"/><rect x="39" y="40" width="1" height="2" fill="#d4d4d4" fill-opacity="0.30"/><rect x="0" y="42" width="6" height="2" fill="#569cd6" fill-opacity="0.60"/><rect x="7" y="42" width="3" height="2" fill="#4ec9b0" fill-opacity="0.60"/><rect x="10" y="42" width="1" height="2" fill="#d4d4d4" fill-opacity="0.30"/><rect x="11" y="42" width="8" height="2" fill="#4ec9b0" fill-opacity="0.60"/><rect x="19" y="42" width="1" height="2" fill="#d4d4d4" fill-opacity="0.30"/><rect x="20" y="42" width="10" height="2" fill="#4ec9b0" fill-opacity="0.60"/><rect x="30" y="42" width="1" height="2" fill="#d4d4d4" fill-opacity="0.30"/><rect x="31" y="42" width="1" height="2" fill="#4ec9b0" fill-opacity="0.75"/><rect x="32" y="42" width="2" height="2" fill="#4ec9b0" fill-opacity="0.60"/><rect x="34" y="42" width="1" height="2" fill="#4ec9b0" fill-opacity="0.75"/><rect x="35" y="42" width="4" height="2" fill="#4ec9b0" fill-opacity="0.60"/><rect x="39" y="42" width="1" height="2" fill="#4ec9b0" fill-opacity="0.75"/><rect x="40" y="42" width="3" height="2" fill="#4ec9b0" fill-opacity="0.60"/><rect x="43" y="42" width="1" height="2" fill="#4ec9b0" fill-opacity="0.75"/><rect x="44" y="42" width="5" height="2" fill="#4ec9b0" fill-opacity="0.60"/><rect x="49" y="42" width="1" height="2" fill="#d4d4d4" fill-opacity="0.30"/><rect x="0" y="44" width="6" height="2" fill="#569cd6" fill-opacity="0.60"/><rect x="7" y="44" width="3" height="2" fill="#4ec9b0" fill-opacity="0.60"/><rect x="10" y="44" width="1" height="2" fill="#d4d4d4" fill-opacity="0.30"/><rect x="11" y="44" width="3" height="2" fill="#4ec9b0" fill-opacity="0.60"/><rect x="14" y="44" width="1" height="2" fill="#4ec9b0" fill-opacity="0.75"/><rect x="15" y="44" width="1" height="2" fill="#4ec9b0" fill-opacity="0.60"/><rect x="16" y="44" width="1" height="2" fill="#d4d4d4" fill-opacity="0.30"/><rect x="17" y="44" width="1" height="2" fill="#4ec9b0" fill-opacity="0.75"/><rect x="18" y="44" width="5" height="2" fill="#4ec9b0" fill-opacity="0.60"/><rect x="23" y="44" width="1" height="2" fill="#d4d4d4" fill-opacity="0.30"/><rect x="0" y="46" width="6" height="2" fill="#569cd6" fill-opacity="0.60"/><rect x="7" y="46" width="3" height="2" fill="#4ec9b0" fill-opacity="0.60"/><rect x="10" y="46" width="1" height="2" fill="#d4d4d4" fill-opacity="0.30"/><rect x="11" y="46" width="3" height="2" fill="#4ec9b0" fill-opacity="0.60"/><rect x="14" y="46" width="1" height="2" fill="#4ec9b0" fill-opacity="0.75"/><rect x="15" y="46" width="1" height="2" fill="#4ec9b0" fill-opacity="0.60"/><rect x="16" y="46" width="1" height="2" fill="#d4d4d4" fill-opacity="0.30"/><rect x="17" y="46" width="1" height="2" fill="#4ec9b0" fill-opacity="0.75"/><rect x="18" y="46" width="5" height="2" fill="#4ec9b0" fill-opacity="0.60"/><rect x="23" y="46" width="1" height="2" fill="#4ec9b0" fill-opacity="0.75"/><rect x="24" y="46" width="6" height="2" fill="#4ec9b0" fill-opacity="0.60"/><rect x="30" y="46" width="1" height="2" fill="#d4d4d4" fill-opacity="0.30"/><rect x="0" y="50" width="6" height="2" fill="#569cd6" fill-opacity="0.60"/><rect x="7" y="50" width="5" height="2" fill="#4ec9b0" fill-opacity="0.60"/><rect x="12" y="50" width="1" height="2" fill="#d4d4d4" fill-opacity="0.30"/><rect x="13" y="50" width="10" height="2" fill="#4ec9b0" fill-opacity="0.60"/><rect x="23" y="50" width="1" height="2" fill="#d4d4d4" fill-opacity="0.30"/><rect x="24" y="50" width="1" height="2" fill="#4ec9b0" fill-opacity="0.75"/><rect x="25" y="50" width="6" height="2" fill="#4ec9b0" fill-opacity="0.60"/><rect x="31" y="50" width="1" height="2" fill="#d4d4d4" fill-opacity="0.30"/><rect x="0" y="54" width="3" height="2" fill="#6a9955" fill-opacity="0.45"/><rect x="1" y="56" width="1" height="2" fill="#6a9955" fill-opacity="0.45"/><rect x="3" y="56" width="1" height="2" fill="#6a9955" fill-opacity="0.75"/><rect x="4" y="56" width="2" height="2" fill="#6a9955" fill-opacity="0.60"/><rect x="7" y="56" width="10" height="2" fill="#6a9955" fill-opacity="0.60"/><rect x="18" y="56" width="3" height="2" fill="#6a9955" fill-opacity="0.60"/><rect x="22" y="56" width="3" height="2" fill="#6a9955" fill-opacity="0.60"/><rect x="26" y="56" width="3" height="2" fill="#6a9955" fill-opacity="0.75"/><rect x="30" y="56" width="4" height="2" fill="#6a9955" fill-opacity="0.60"/><rect x="35" y="56" width="4" height="2" fill="#6a9955" fill-opacity="0.60"/><rect x="1" y="58" width="2" height="2" fill="#6a9955" fill-opacity="0.45"/><rect x="0" y="60" width="6" height="2" fill="#569cd6" fill-opacity="0.60"/><rect x="7" y="60" width="5" height="2" fill="#569cd6" fill-opacity="0.60"/><rect x="13" y="60" width="1" height="2" fill="#4ec9b0" fill-opacity="0.75"/><rect x="14" y="60" width="4" height="2" fill="#4ec9b0" fill-opacity="0.60"/><rect x="19" y="60" width="1" height="2" fill="#ffd700" fill-opacity="0.45"/><rect x="4" y="64" width="7" height="2" fill="#569cd6" fill-opacity="0.60"/><rect x="12" y="64" width="6" height="2" fill="#569cd6" fill-opacity="0.60"/><rect x="19" y="64" width="5" height="2" fill="#569cd6" fill-opacity="0.60"/><rect x="25" y="64" width="1" height="2" fill="#4ec9b0" fill-opacity="0.75"/><rect x="26" y="64" width="5" height="2" fill="#4ec9b0" fill-opacity="0.60"/><rect x="32" y="64" width="6" height="2" fill="#9cdcfe" fill-opacity="0.60"/><rect x="39" y="64" width="1" height="2" fill="#d4d4d4" fill-opacity="0.45"/><rect x="41" y="64" width="1" height="2" fill="#4ec9b0" fill-opacity="0.75"/><rect x="42" y="64" width="5" height="2" fill="#4ec9b0" fill-opacity="0.60"/><rect x="47" y="64" width="1" height="2" fill="#4ec9b0" fill-opacity="0.75"/><rect x="48" y="64" width="6" height="2" fill="#4ec9b0" fill-opacity="0.60"/><rect x="54" y="64" width="1" height="2" fill="#d4d4d4" fill-opacity="0.30"/><rect x="55" y="64" width="3" height="2" fill="#dcdcaa" fill-opacity="0.60"/><rect x="58" y="64" width="1" height="2" fill="#dcdcaa" fill-opacity="0.75"/><rect x="59" y="64" width="5" height="2" fill="#dcdcaa" fill-opacity="0.60"/><rect x="64" y="64" width="1" height="2" fill="#da70d6" fill-opacity="0.45"/><rect x="65" y="64" width="1" height="2" fill="#ce9178" fill-opacity="0.30"/><rect x="66" y="64" width="5" height="2" fill="#ce9178" fill-opacity="0.60"/><rect x="71" y="64" width="1" height="2" fill="#ce9178" fill-opacity="0.30"/><rect x="72" y="64" width="1" height="2" fill="#da70d6" fill-opacity="0.45"/><rect x="73" y="64" width="1" height="2" fill="#d4d4d4" fill-opacity="0.30"/><rect x="4" y="68" width="6" height="2" fill="#569cd6" fill-opacity="0.60"/><rect x="11" y="68" width="6" height="2" fill="#569cd6" fill-opacity="0.60"/><rect x="18" y="68" width="4" height="2" fill="#569cd6" fill-opacity="0.60"/><rect x="23" y="68" width="4" height="2" fill="#dcdcaa" fill-opacity="0.60"/><rect x="27" y="68" width="1" height="2" fill="#da70d6" fill-opacity="0.45"/><rect x="28" y="68" width="1" height="2" fill="#4ec9b0" fill-opacity="0.75"/><rect x="29" y="68" width="5" height="2" fill="#4ec9b0" fill-opacity="0.60"/><rect x="34" y="68" width="2" height="2" fill="#179fff" fill-opacity="0.45"/><rect x="37" y="68" width="4" height="2" fill="#9cdcfe" fill-opacity="0.60"/><rect x="41" y="68" width="1" height="2" fill="#da70d6" fill-opacity="0.45"/><rect x="43" y="68" width="1" height="2" fill="#da70d6" fill-opacity="0.45"/><rect x="8" y="70" width="3" height="2" fill="#dcdcaa" fill-opacity="0.60"/><rect x="11" y="70" width="1" height="2" fill="#dcdcaa" fill-opacity="0.75"/><rect x="12" y="70" width="1" height="2" fill="#dcdcaa" fill-opacity="0.60"/><rect x="13" y="70" width="1" height="2" fill="#dcdcaa" fill-opacity="0.75"/><rect x="14" y="70" width="5" height="2" fill="#dcdcaa" fill-opacity="0.60"/><rect x="19" y="70" width="1" height="2" fill="#179fff" fill-opacity="0.45"/><rect x="20" y="70" width="1" height="2" fill="#4ec9b0" fill-opacity="0.75"/><rect x="21" y="70" width="5" height="2" fill="#4ec9b0" fill-opacity="0.60"/><rect x="26" y="70" width="1" height="2" fill="#d4d4d4" fill-opacity="0.30"/><rect x="27" y="70" width="7" height="2" fill="#dcdcaa" fill-opacity="0.60"/><rect x="34" y="70" width="1" height="2" fill="#dcdcaa" fill-opacity="0.75"/><rect x="35" y="70" width="5" height="2" fill="#dcdcaa" fill-opacity="0.60"/><rect x="40" y="70" width="2" height="2" fill="#ffd700" fill-opacity="0.45"/><rect x="42" y="70" width="1" height="2" fill="#179fff" fill-opacity="0.45"/><rect x="43" y="70" width="1" height="2" fill="#d4d4d4" fill-opacity="0.30"/><rect x="8" y="74" width="1" height="2" fill="#4ec9b0" fill-opacity="0.75"/><rect x="9" y="74" width="2" height="2" fill="#4ec9b0" fill-opacity="0.60"/><rect x="11" y="74" width="1" height="2" fill="#4ec9b0" fill-opacity="0.75"/><rect x="12" y="74" width="6" height="2" fill="#4ec9b0" fill-opacity="0.60"/><rect x="19" y="74" width="3" height="2" fill="#9cdcfe" fill-opacity="0.60"/><rect x="23" y="74" width="1" height="2" fill="#d4d4d4" fill-opacity="0.45"/><rect x="25" y="74" width="4" height="2" fill="#569cd6" fill-opacity="0.60"/><rect x="29" y="74" width="1" height="2" fill="#d4d4d4" fill-opacity="0.30"/><rect x="8" y="76" width="3" height="2" fill="#c586c0" fill-opacity="0.60"/><rect x="12" y="76" width="1" height="2" fill="#179fff" fill-opacity="0.45"/><rect x="12" y="78" width="3" height="2" fill="#9cdcfe" fill-opacity="0.60"/><rect x="16" y="78" width="1" height="2" fill="#d4d4d4" fill-opacity="0.45"/><rect x="18" y="78" width="3" height="2" fill="#c586c0" fill-opacity="0.60"/><rect x="22" y="78" width="1" height="2" fill="#dcdcaa" fill-opacity="0.75"/><rect x="23" y="78" width="2" height="2" fill="#dcdcaa" fill-opacity="0.60"/><rect x="25" y="78" width="1" height="2" fill="#dcdcaa" fill-opacity="0.75"/><rect x="26" y="78" width="6" height="2" fill="#dcdcaa" fill-opacity="0.60"/><rect x="32" y="78" width="1" height="2" fill="#ffd700" fill-opacity="0.45"/><rect x="33" y="78" width="4" height="2" fill="#9cdcfe" fill-opacity="0.60"/><rect x="37" y="78" width="1" height="2" fill="#ffd700" fill-opacity="0.45"/><rect x="38" y="78" width="1" height="2" fill="#d4d4d4" fill-opacity="0.30"/><rect x="12" y="82" width="1" height="2" fill="#4ec9b0" fill-opacity="0.75"/><rect x="13" y="82" width="2" height="2" fill="#4ec9b0" fill-opacity="0.60"/><rect x="15" y="82" width="1" height="2" fill="#4ec9b0" fill-opacity="0.75"/><rect x="16" y="82" width="5" height="2" fill="#4ec9b0" fill-opacity="0.60"/><rect x="21" y="82" width="1" height="2" fill="#4ec9b0" fill-opacity="0.75"/><rect x="22" y="82" width="9" height="2" fill="#4ec9b0" fill-opacity="0.60"/><rect x="32" y="82" width="3" height="2" fill="#9cdcfe" fill-opacity="0.60"/><rect x="35" y="82" width="1" height="2" fill="#9cdcfe" fill-opacity="0.75"/><rect x="36" y="82" width="5" height="2" fill="#9cdcfe" fill-opacity="0.60"/><rect x="41" y="82" width="1" height="2" fill="#9cdcfe" fill-opacity="0.75"/><rect x="42" y="82" width="9" height="2" fill="#9cdcfe" fill-opacity="0.60"/><rect x="52" y="82" width="1" height="2" fill="#d4d4d4" fill-opacity="0.45"/><rect x="54" y="82" width="3" height="2" fill="#9cdcfe" fill-opacity="0.60"/><rect x="57" y="82" width="1" height="2" fill="#d4d4d4" fill-opacity="0.30"/><rect x="58" y="82" width="3" height="2" fill="#dcdcaa" fill-opacity="0.60"/><rect x="61" y="82" width="1" height="2" fill="#dcdcaa" fill-opacity="0.75"/><rect x="62" y="82" width="2" height="2" fill="#dcdcaa" fill-opacity="0.60"/><rect x="64" y="82" width="1" height="2" fill="#dcdcaa" fill-opacity="0.75"/><rect x="65" y="82" width="5" height="2" fill="#dcdcaa" fill-opacity="0.60"/><rect x="70" y="82" width="1" height="2" fill="#dcdcaa" fill-opacity="0.75"/><rect x="71" y="82" width="9" height="2" fill="#dcdcaa" fill-opacity="0.60"/><rect x="80" y="82" width="2" height="2" fill="#ffd700" fill-opacity="0.45"/><rect x="82" y="82" width="1" height="2" fill="#d4d4d4" fill-opacity="0.30"/><rect x="12" y="84" width="1" height="2" fill="#4ec9b0" fill-opacity="0.75"/><rect x="13" y="84" width="2" height="2" fill="#4ec9b0" fill-opacity="0.60"/><rect x="15" y="84" width="1" height="2" fill="#4ec9b0" fill-opacity="0.75"/><rect x="16" y="84" width="4" height="2" fill="#4ec9b0" fill-opacity="0.60"/><rect x="20" y="84" width="1" height="2" fill="#4ec9b0" fill-opacity="0.75"/><rect x="21" y="84" width="3" height="2" fill="#4ec9b0" fill-opacity="0.60"/><rect x="24" y="84" width="1" height="2" fill="#4ec9b0" fill-opacity="0.75"/><rect x="25" y="84" width="5" height="2" fill="#4ec9b0" fill-opacity="0.60"/><rect x="30" y="84" width="1" height="2" fill="#d4d4d4" fill-opacity="0.30"/><rect x="31" y="84" width="8" height="2" fill="#dcdcaa" fill-opacity="0.60"/><rect x="39" y="84" width="1" height="2" fill="#dcdcaa" fill-opacity="0.75"/><rect x="40" y="84" width="1" height="2" fill="#dcdcaa" fill-opacity="0.60"/><rect x="41" y="84" width="1" height="2" fill="#dcdcaa" fill-opacity="0.75"/><rect x="42" y="84" width="3" height="2" fill="#dcdcaa" fill-opacity="0.60"/><rect x="45" y="84" width="1" height="2" fill="#ffd700" fill-opacity="0.45"/><rect x="46" y="84" width="3" height="2" fill="#9cdcfe" fill-opacity="0.60"/><rect x="49" y="84" width="1" height="2" fill="#9cdcfe" fill-opacity="0.75"/><rect x="50" y="84" width="5" height="2" fill="#9cdcfe" fill-opacity="0.60"/><rect x="55" y="84" width="1" height="2" fill="#9cdcfe" fill-opacity="0.75"/><rect x="56" y="84" width="9" height="2" fill="#9cdcfe" fill-opacity="0.60"/><rect x="65" y="84" width="1" height="2" fill="#d4d4d4" fill-opacity="0.30"/><rect x="66" y="84" width="8" height="2" fill="#dcdcaa" fill-opacity="0.60"/><rect x="74" y="84" width="1" height="2" fill="#dcdcaa" fill-opacity="0.75"/><rect x="75" y="84" width="3" height="2" fill="#dcdcaa" fill-opacity="0.60"/><rect x="78" y="84" width="2" height="2" fill="#da70d6" fill-opacity="0.45"/><rect x="80" y="84" width="1" height="2" fill="#d4d4d4" fill-opacity="0.30"/><rect x="82" y="84" width="3" height="2" fill="#9cdcfe" fill-opacity="0.60"/><rect x="85" y="84" width="1" height="2" fill="#9cdcfe" fill-opacity="0.75"/><rect x="86" y="84" width="5" height="2" fill="#9cdcfe" fill-opacity="0.60"/><rect x="91" y="84" width="1" height="2" fill="#9cdcfe" fill-opacity="0.75"/><rect x="92" y="84" width="9" height="2" fill="#9cdcfe" fill-opacity="0.60"/><rect x="101" y="84" width="1" height="2" fill="#d4d4d4" fill-opacity="0.30"/><rect x="102" y="84" width="8" height="2" fill="#dcdcaa" fill-opacity="0.60"/><rect x="110" y="84" width="1" height="2" fill="#dcdcaa" fill-opacity="0.75"/><rect x="111" y="84" width="1" height="2" fill="#dcdcaa" fill-opacity="0.60"/><rect x="12" y="88" width="3" height="2" fill="#dcdcaa" fill-opacity="0.60"/><rect x="15" y="88" width="1" height="2" fill="#dcdcaa" fill-opacity="0.75"/><rect x="16" y="88" width="3" height="2" fill="#dcdcaa" fill-opacity="0.60"/><rect x="19" y="88" width="1" height="2" fill="#ffd700" fill-opacity="0.45"/><rect x="20" y="88" width="1" height="2" fill="#4ec9b0" fill-opacity="0.75"/><rect x="21" y="88" width="6" height="2" fill="#4ec9b0" fill-opacity="0.60"/><rect x="27" y="88" width="1" height="2" fill="#d4d4d4" fill-opacity="0.30"/><rect x="28" y="88" width="3" height="2" fill="#dcdcaa" fill-opacity="0.60"/><rect x="31" y="88" width="1" height="2" fill="#dcdcaa" fill-opacity="0.75"/><rect x="32" y="88" width="6" height="2" fill="#dcdcaa" fill-opacity="0.60"/><rect x="38" y="88" width="2" height="2" fill="#da70d6" fill-opacity="0.45"/><rect x="40" y="88" width="1" height="2" fill="#d4d4d4" fill-opacity="0.30"/><rect x="42" y="88" width="3" height="2" fill="#c586c0" fill-opacity="0.60"/><rect x="46" y="88" width="1" height="2" fill="#dcdcaa" fill-opacity="0.75"/><rect x="47" y="88" width="8" height="2" fill="#dcdcaa" fill-opacity="0.60"/><rect x="55" y="88" width="1" height="2" fill="#dcdcaa" fill-opacity="0.75"/><rect x="56" y="88" width="5" height="2" fill="#dcdcaa" fill-opacity="0.60"/><rect x="61" y="88" width="1" height="2" fill="#dcdcaa" fill-opacity="0.75"/><rect x="62" y="88" width="4" height="2" fill="#dcdcaa" fill-opacity="0.60"/><rect x="66" y="88" width="1" height="2" fill="#da70d6" fill-opacity="0.45"/><rect x="67" y="88" width="3" height="2" fill="#9cdcfe" fill-opacity="0.60"/><rect x="70" y="88" width="1" height="2" fill="#da70d6" fill-opacity="0.45"/><rect x="71" y="88" width="1" height="2" fill="#d4d4d4" fill-opacity="0.30"/><rect x="73" y="88" width="3" height="2" fill="#9cdcfe" fill-opacity="0.60"/><rect x="76" y="88" width="1" height="2" fill="#ffd700" fill-opacity="0.45"/><rect x="77" y="88" width="1" height="2" fill="#d4d4d4" fill-opacity="0.30"/><rect x="8" y="90" width="1" height="2" fill="#179fff" fill-opacity="0.45"/><rect x="10" y="90" width="5" height="2" fill="#c586c0" fill-opacity="0.60"/><rect x="16" y="90" width="1" height="2" fill="#179fff" fill-opacity="0.45"/><rect x="17" y="90" width="1" height="2" fill="#4ec9b0" fill-opacity="0.75"/><rect x="18" y="90" width="8" height="2" fill="#4ec9b0" fill-opacity="0.60"/><rect x="27" y="90" width="1" height="2" fill="#9cdcfe" fill-opacity="0.60"/><rect x="28" y="90" width="1" height="2" fill="#179fff" fill-opacity="0.45"/><rect x="30" y="90" width="1" height="2" fill="#179fff" fill-opacity="0.45"/><rect x="12" y="92" width="6" height="2" fill="#9cdcfe" fill-opacity="0.60"/><rect x="18" y="92" width="1" height="2" fill="#d4d4d4" fill-opacity="0.30"/><rect x="19" y="92" width="5" height="2" fill="#dcdcaa" fill-opacity="0.60"/><rect x="24" y="92" width="1" height="2" fill="#ffd700" fill-opacity="0.45"/><rect x="25" y="92" width="1" height="2" fill="#ce9178" fill-opacity="0.30"/><rect x="26" y="92" width="1" height="2" fill="#ce9178" fill-opacity="0.75"/><rect x="27" y="92" width="2" height="2" fill="#ce9178" fill-opacity="0.60"/><rect x="30" y="92" width="3" height="2" fill="#ce9178" fill-opacity="0.75"/><rect x="34" y="92" width="4" height="2" fill="#ce9178" fill-opacity="0.60"/><rect x="39" y="92" width="4" height="2" fill="#ce9178" fill-opacity="0.60"/><rect x="44" y="92" width="6" height="2" fill="#ce9178" fill-opacity="0.60"/><rect x="51" y="92" width="6" height="2" fill="#ce9178" fill-opacity="0.60"/><rect x="57" y="92" width="1" height="2" fill="#ce9178" fill-opacity="0.30"/><rect x="59" y="92" width="7" height="2" fill="#ce9178" fill-opacity="0.60"/><rect x="67" y="92" width="7" height="2" fill="#ce9178" fill-opacity="0.60"/><rect x="74" y="92" width="1" height="2" fill="#ce9178" fill-opacity="0.30"/><rect x="75" y="92" width="1" height="2" fill="#d4d4d4" fill-opacity="0.30"/><rect x="77" y="92" width="1" height="2" fill="#9cdcfe" fill-opacity="0.60"/><rect x="78" y="92" width="1" height="2" fill="#ffd700" fill-opacity="0.45"/><rect x="79" y="92" width="1" height="2" fill="#d4d4d4" fill-opacity="0.30"/><rect x="12" y="96" width="2" height="2" fill="#c586c0" fill-opacity="0.60"/><rect x="15" y="96" width="1" height="2" fill="#ffd700" fill-opacity="0.45"/><rect x="16" y="96" width="3" height="2" fill="#9cdcfe" fill-opacity="0.60"/><rect x="20" y="96" width="2" height="2" fill="#d4d4d4" fill-opacity="0.45"/><rect x="23" y="96" width="4" height="2" fill="#569cd6" fill-opacity="0.60"/><rect x="27" y="96" width="1" height="2" fill="#ffd700" fill-opacity="0.45"/><rect x="29" y="96" width="1" height="2" fill="#ffd700" fill-opacity="0.45"/><rect x="16" y="98" width="3" height="2" fill="#9cdcfe" fill-opacity="0.60"/><rect x="19" y="98" width="1" height="2" fill="#d4d4d4" fill-opacity="0.30"/><rect x="20" y="98" width="5" height="2" fill="#dcdcaa" fill-opacity="0.60"/><rect x="25" y="98" width="2" height="2" fill="#da70d6" fill-opacity="0.45"/><rect x="27" y="98" width="1" height="2" fill="#d4d4d4" fill-opacity="0.30"/><rect x="12" y="100" width="1" height="2" fill="#ffd700" fill-opacity="0.45"/><rect x="12" y="104" width="1" height="2" fill="#4ec9b0" fill-opacity="0.75"/><rect x="13" y="104" width="5" height="2" fill="#4ec9b0" fill-opacity="0.60"/><rect x="18" y="104" width="1" height="2" fill="#d4d4d4" fill-opacity="0.30"/><rect x="19" y="104" width="4" height="2" fill="#dcdcaa" fill-opacity="0.60"/><rect x="23" y="104" width="1" height="2" fill="#ffd700" fill-opacity="0.45"/><rect x="24" y="104" width="1" height="2" fill="#b5cea8" fill-opacity="0.75"/><rect x="25" y="104" width="1" height="2" fill="#ffd700" fill-opacity="0.45"/><rect x="26" y="104" width="1" height="2" fill="#d4d4d4" fill-opacity="0.30"/><rect x="8" y="106" width="1" height="2" fill="#179fff" fill-opacity="0.45"/><rect x="4" y="108" width="1" height="2" fill="#ffd700" fill-opacity="0.45"/><rect x="4" y="112" width="6" height="2" fill="#569cd6" fill-opacity="0.60"/><rect x="11" y="112" width="4" height="2" fill="#569cd6" fill-opacity="0.60"/><rect x="16" y="112" width="3" height="2" fill="#dcdcaa" fill-opacity="0.60"/><rect x="19" y="112" width="1" height="2" fill="#dcdcaa" fill-opacity="0.75"/><rect x="20" y="112" width="3" height="2" fill="#dcdcaa" fill-opacity="0.60"/><rect x="23" y="112" width="1" height="2" fill="#ffd700" fill-opacity="0.45"/><rect x="24" y="112" width="1" height="2" fill="#4ec9b0" fill-opacity="0.75"/><rect x="25" y="112" width="6" height="2" fill="#4ec9b0" fill-opacity="0.60"/><rect x="32" y="112" width="7" height="2" fill="#9cdcfe" fill-opacity="0.60"/><rect x="39" y="112" width="1" height="2" fill="#d4d4d4" fill-opacity="0.30"/><rect x="41" y="112" width="1" height="2" fill="#4ec9b0" fill-opacity="0.75"/><rect x="42" y="112" width="8" height="2" fill="#4ec9b0" fill-opacity="0.60"/><rect x="50" y="112" width="1" height="2" fill="#4ec9b0" fill-opacity="0.75"/><rect x="51" y="112" width="5" height="2" fill="#4ec9b0" fill-opacity="0.60"/><rect x="56" y="112" width="1" height="2" fill="#4ec9b0" fill-opacity="0.75"/><rect x="57" y="112" width="4" height="2" fill="#4ec9b0" fill-opacity="0.60"/><rect x="62" y="112" width="9" height="2" fill="#9cdcfe" fill-opacity="0.60"/><rect x="71" y="112" width="1" height="2" fill="#9cdcfe" fill-opacity="0.75"/><rect x="72" y="112" width="5" height="2" fill="#9cdcfe" fill-opacity="0.60"/><rect x="77" y="112" width="1" height="2" fill="#d4d4d4" fill-opacity="0.30"/><rect x="79" y="112" width="1" height="2" fill="#4ec9b0" fill-opacity="0.75"/><rect x="80" y="112" width="2" height="2" fill="#4ec9b0" fill-opacity="0.60"/><rect x="82" y="112" width="1" height="2" fill="#4ec9b0" fill-opacity="0.75"/><rect x="83" y="112" width="6" height="2" fill="#4ec9b0" fill-opacity="0.60"/><rect x="90" y="112" width="3" height="2" fill="#9cdcfe" fill-opacity="0.60"/><rect x="93" y="112" width="1" height="2" fill="#ffd700" fill-opacity="0.45"/><rect x="95" y="112" width="6" height="2" fill="#569cd6" fill-opacity="0.60"/><rect x="102" y="112" width="1" height="2" fill="#4ec9b0" fill-opacity="0.75"/><rect x="103" y="112" width="8" height="2" fill="#4ec9b0" fill-opacity="0.60"/><rect x="8" y="114" width="9" height="2" fill="#9cdcfe" fill-opacity="0.60"/><rect x="17" y="114" width="1" height="2" fill="#9cdcfe" fill-opacity="0.75"/><rect x="18" y="114" width="5" height="2" fill="#9cdcfe" fill-opacity="0.60"/><rect x="23" y="114" width="1" height="2" fill="#d4d4d4" fill-opacity="0.30"/><rect x="24" y="114" width="3" height="2" fill="#dcdcaa" fill-opacity="0.60"/><rect x="27" y="114" width="1" height="2" fill="#dcdcaa" fill-opacity="0.75"/><rect x="28" y="114" width="5" height="2" fill="#dcdcaa" fill-opacity="0.60"/><rect x="33" y="114" width="2" height="2" fill="#da70d6" fill-opacity="0.45"/><rect x="35" y="114" width="1" height="2" fill="#d4d4d4" fill-opacity="0.30"/><rect x="8" y="118" width="1" height="2" fill="#4ec9b0" fill-opacity="0.75"/><rect x="9" y="118" width="3" height="2" fill="#4ec9b0" fill-opacity="0.60"/><rect x="12" y="118" width="1" height="2" fill="#4ec9b0" fill-opacity="0.75"/><rect x="13" y="118" width="5" height="2" fill="#4ec9b0" fill-opacity="0.60"/><rect x="19" y="118" width="6" height="2" fill="#9cdcfe" fill-opacity="0.60"/><rect x="26" y="118" width="1" height="2" fill="#d4d4d4" fill-opacity="0.45"/><rect x="28" y="118" width="3" height="2" fill="#9cdcfe" fill-opacity="0.60"/><rect x="31" y="118" width="1" height="2" fill="#d4d4d4" fill-opacity="0.30"/><rect x="32" y="118" width="3" height="2" fill="#dcdcaa" fill-opacity="0.60"/><rect x="35" y="118" width="1" height="2" fill="#dcdcaa" fill-opacity="0.75"/><rect x="36" y="118" width="3" height="2" fill="#dcdcaa" fill-opacity="0.60"/><rect x="39" y="118" width="1" height="2" fill="#dcdcaa" fill-opacity="0.75"/><rect x="40" y="118" width="5" height="2" fill="#dcdcaa" fill-opacity="0.60"/><rect x="45" y="118" width="2" height="2" fill="#da70d6" fill-opacity="0.45"/><rect x="47" y="118" width="1" height="2" fill="#d4d4d4" fill-opacity="0.30"/><rect x="8" y="122" width="7" height="2" fill="#9cdcfe" fill-opacity="0.60"/><rect x="15" y="122" width="1" height="2" fill="#d4d4d4" fill-opacity="0.30"/><rect x="16" y="122" width="3" height="2" fill="#dcdcaa" fill-opacity="0.60"/><rect x="19" y="122" width="1" height="2" fill="#dcdcaa" fill-opacity="0.75"/><rect x="20" y="122" width="7" height="2" fill="#dcdcaa" fill-opacity="0.60"/><rect x="27" y="122" width="1" height="2" fill="#dcdcaa" fill-opacity="0.75"/><rect x="28" y="122" width="3" height="2" fill="#dcdcaa" fill-opacity="0.60"/><rect x="31" y="122" width="1" height="2" fill="#da70d6" fill-opacity="0.45"/><rect x="32" y="122" width="3" height="2" fill="#c586c0" fill-opacity="0.60"/><rect x="36" y="122" width="1" height="2" fill="#dcdcaa" fill-opacity="0.75"/><rect x="37" y="122" width="5" height="2" fill="#dcdcaa" fill-opacity="0.60"/><rect x="42" y="122" width="1" height="2" fill="#179fff" fill-opacity="0.45"/><rect x="43" y="122" width="6" height="2" fill="#9cdcfe" fill-opacity="0.60"/><rect x="49" y="122" width="2" height="2" fill="#d4d4d4" fill-opacity="0.30"/><rect x="51" y="122" width="4" height="2" fill="#dcdcaa" fill-opacity="0.60"/><rect x="55" y="122" width="1" height="2" fill="#d4d4d4" fill-opacity="0.30"/><rect x="57" y="122" width="1" height="2" fill="#ce9178" fill-opacity="0.30"/><rect x="58" y="122" width="7" height="2" fill="#ce9178" fill-opacity="0.60"/><rect x="65" y="122" width="1" height="2" fill="#ce9178" fill-opacity="0.30"/><rect x="66" y="122" width="1" height="2" fill="#179fff" fill-opacity="0.45"/><rect x="67" y="122" width="1" height="2" fill="#da70d6" fill-opacity="0.45"/><rect x="68" y="122" width="1" height="2" fill="#d4d4d4" fill-opacity="0.30"/><rect x="8" y="126" width="6" height="2" fill="#9cdcfe" fill-opacity="0.60"/><rect x="14" y="126" width="1" height="2" fill="#d4d4d4" fill-opacity="0.30"/><rect x="15" y="126" width="3" height="2" fill="#dcdcaa" fill-opacity="0.60"/><rect x="18" y="126" width="2" height="2" fill="#da70d6" fill-opacity="0.45"/><rect x="20" y="126" width="1" height="2" fill="#d4d4d4" fill-opacity="0.30"/><rect x="4" y="128" width="1" height="2" fill="#ffd700" fill-opacity="0.45"/><rect x="4" y="132" width="6" height="2" fill="#569cd6" fill-opacity="0.60"/><rect x="11" y="132" width="4" height="2" fill="#569cd6" fill-opacity="0.60"/><rect x="16" y="132" width="3" height="2" fill="#dcdcaa" fill-opacity="0.60"/><rect x="19" y="132" width="1" height="2" fill="#dcdcaa" fill-opacity="0.75"/><rect x="20" y="132" width="1" height="2" fill="#dcdcaa" fill-opacity="0.60"/><rect x="21" y="132" width="1" height="2" fill="#dcdcaa" fill-opacity="0.75"/><rect x="22" y="132" width="5" height="2" fill="#dcdcaa" fill-opacity="0.60"/><rect x="27" y="132" width="1" height="2" fill="#ffd700" fill-opacity="0.45"/><rect x="28" y="132" width="2" height="2" fill="#4ec9b0" fill-opacity="0.75"/><rect x="30" y="132" width="6" height="2" fill="#4ec9b0" fill-opacity="0.60"/><rect x="37" y="132" width="1" height="2" fill="#4ec9b0" fill-opacity="0.75"/><rect x="38" y="132" width="5" height="2" fill="#4ec9b0" fill-opacity="0.60"/><rect x="44" y="132" width="6" height="2" fill="#9cdcfe" fill-opacity="0.60"/><rect x="50" y="132" width="1" height="2" fill="#ffd700" fill-opacity="0.45"/><rect x="52" y="132" width="1" height="2" fill="#ffd700" fill-opacity="0.45"/><rect x="8" y="134" width="6" height="2" fill="#9cdcfe" fill-opacity="0.60"/><rect x="14" y="134" width="1" height="2" fill="#d4d4d4" fill-opacity="0.30"/><rect x="15" y="134" width="3" height="2" fill="#dcdcaa" fill-opacity="0.60"/><rect x="18" y="134" width="1" height="2" fill="#dcdcaa" fill-opacity="0.75"/><rect x="19" y="134" width="3" height="2" fill="#dcdcaa" fill-opacity="0.60"/><rect x="22" y="134" width="1" height="2" fill="#da70d6" fill-opacity="0.45"/><rect x="23" y="134" width="1" height="2" fill="#ce9178" fill-opacity="0.30"/><rect x="24" y="134" width="4" height="2" fill="#ce9178" fill-opacity="0.60"/><rect x="28" y="134" width="1" height="2" fill="#ce9178" fill-opacity="0.30"/><rect x="29" y="134" width="1" height="2" fill="#da70d6" fill-opacity="0.45"/><rect x="30" y="134" width="1" height="2" fill="#d4d4d4" fill-opacity="0.30"/><rect x="4" y="136" width="1" height="2" fill="#ffd700" fill-opacity="0.45"/><rect x="0" y="138" width="1" height="2" fill="#ffd700" fill-opacity="0.45"/></svg>
<div class="abs" style="left:1906px;top:57px;width:1px;height:686px;background:#3c3c3c"></div>
<div class="abs" style="left:1907px;top:281px;width:13px;height:2px;background:#a3a39a"></div><div class="abs" style="left:1907px;top:283px;width:13px;height:5px;background:#4d4a19"></div>

<!-- panel -->
<div id="panel"></div>
<div class="ptab" style="left:687px">PROBLEMS</div>
<div class="abs" style="left:757px;top:753px;width:28px;height:18px;border-radius:9px;background:#4d4d4d;color:#ffffff;font-size:11px;line-height:18px;text-align:center">1K+</div>
<div class="ptab" style="left:807px">OUTPUT</div>
<div class="ptab" style="left:877px;color:#e7e7e7">TERMINAL</div>
<div class="abs" style="left:875px;top:774px;width:60px;height:1px;background:#e7e7e7"></div>
<div class="ptab" style="left:956px">DEBUG CONSOLE</div>
<svg class="abs" style="left:1826px;top:752px" width="94" height="20" viewBox="0 0 94 20">
  <g fill="none" stroke="#c5c5c5" stroke-width="1.1">
    <path d="M13.5 3.5v13M7 10h13"/>
    <path d="M26.5 8.5l3.3 3.3 3.3-3.3" stroke-width="0.9"/>
    <path d="M48 13l5-5 5 5"/>
    <path d="M71 5.5l8.5 8.5M79.5 5.5l-8.5 8.5"/>
  </g>
</svg>
<div class="term" style="top:790px"> /usr/bin/env /Library/Internet\ Plug-Ins/JavaAppletPlugin.plugin/Contents/Home/bin/java -agentlib:jdwp=transport=dt_socket,server=n,suspend=y,address=local</div>
<div class="term" style="top:804px">host:50623 -cp /var/folders/3w/2z553_vs3w73nwsvbnk8807m0000gn/T/cp_5vwz2lym63q1afrcrz0rinp0t.jar co.rsk.Start --regtest -Xkeyvalue.datasource=leveldb</div>
<div class="term" style="top:818px">(base) reynoldmorel@Reynolds-MacBook-Pro rskj %  /usr/bin/env /Library/Internet\ Plug-Ins/JavaAppletPlugin.plugin/Contents/Home/bin/java -agentlib:jdwp=tran</div>
<div class="term" style="top:832px">sport=dt_socket,server=n,suspend=y,address=localhost:50623 -cp /var/folders/3w/2z553_vs3w73nwsvbnk8807m0000gn/T/cp_5vwz2lym63q1afrcrz0rinp0t.jar co.rsk.Star</div>
<div class="term" style="top:846px">t --regtest -Xkeyvalue.datasource=leveldb</div>
<div class="abs" style="left:1800px;top:778px;width:1px;height:202px;background:#474747"></div>
<svg class="abs" style="left:1810px;top:781px" width="18" height="18" viewBox="0 0 18 18"><g fill="none" stroke="#cccccc" stroke-width="1"><rect x="2.5" y="2.5" width="13" height="13" rx="1"/><path d="M7 6l3 3-3 3"/></g></svg>
<div class="sb" style="left:1830px;top:779px;font-size:13.6px;line-height:22px;color:#cccccc">zsh</div>
<div class="abs" style="left:1801px;top:800px;width:119px;height:22px;background:#37373d"></div>
<svg class="abs" style="left:1810px;top:803px" width="18" height="18" viewBox="0 0 18 18"><g fill="none" stroke="#bbbbbb" stroke-width="1"><ellipse cx="9" cy="10" rx="4.5" ry="5.5"/><path d="M6.5 5.5a2.5 2.5 0 0 1 5 0M1 10h3.5M13.5 10h3.5M2.5 4.5l2.5 2.5M15.5 4.5l-2.5 2.5M2.5 15.5l2.5-2.5M15.5 15.5l-2.5-2.5M6.5 7.5l5 5M11.5 7.5l-5 5"/></g></svg>
<div class="sb" style="left:1830px;top:801px;font-size:13.6px;line-height:22px;color:#cccccc">Debug: Start</div>

<!-- arrows -->
<svg class="abs" style="left:0;top:0" width="1920" height="980" viewBox="0 0 1920 980">
  <g stroke="#ff2600" stroke-width="4.2" stroke-linecap="butt" fill="none">
    <path d="M326 89.9L431 33.5"/>
    <path d="M1249.6 98.5L1086 30.5"/>
    <path d="M512.9 354.4L645 401.5"/>
  </g>
  <g fill="#ff2600" stroke="none">
    <path d="M451 23.3L423 23.8L435 45.4z"/>
    <path d="M1065.2 22.5L1092.8 20.4L1083.4 42.3z"/>
    <path d="M667.3 408.3L647.5 389L639 412.8z"/>
  </g>
</svg>
</body></html>
